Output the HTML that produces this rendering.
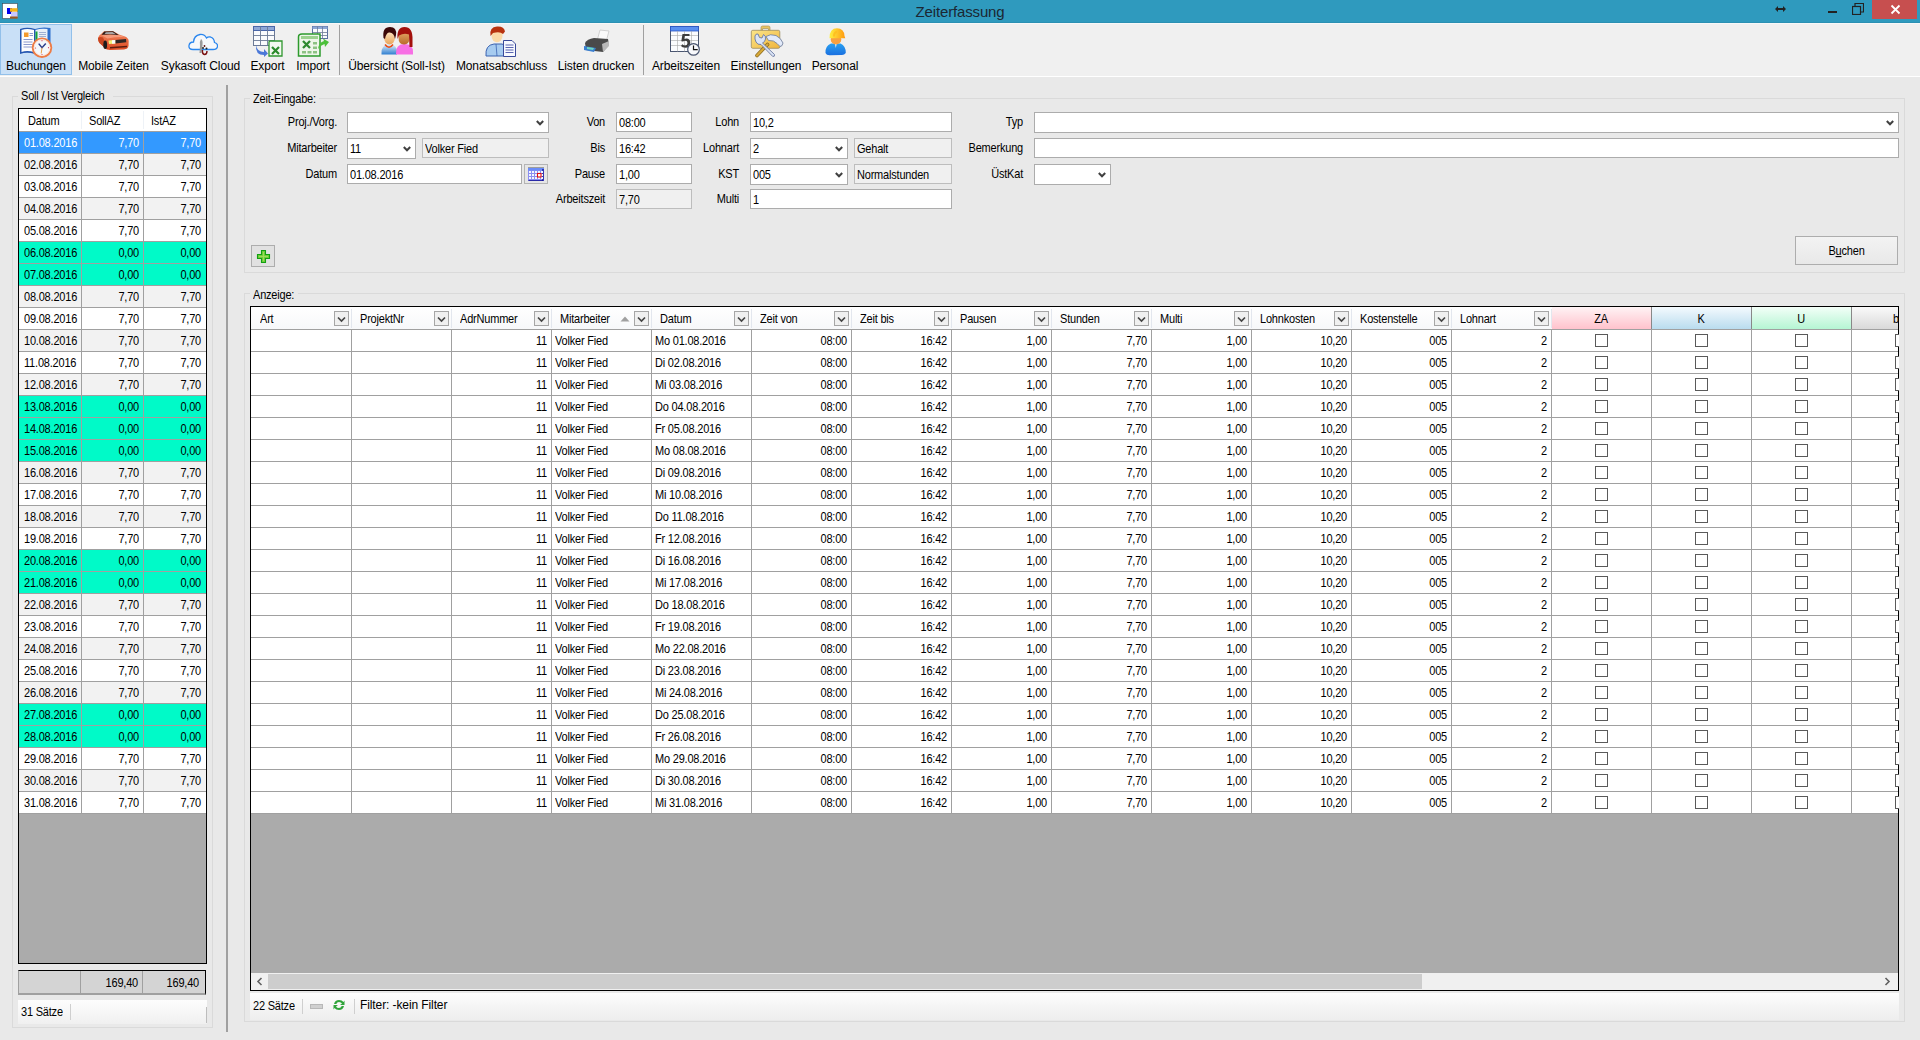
<!DOCTYPE html><html><head><meta charset="utf-8"><title>Zeiterfassung</title><style>
*{margin:0;padding:0;box-sizing:border-box}
html,body{width:1920px;height:1040px;overflow:hidden}
body{position:relative;background:#e9e9e9;font-family:"Liberation Sans",sans-serif;font-size:11px;color:#000}
.a{position:absolute}
.t{position:absolute;white-space:pre;line-height:13px;transform:scaleY(1.12);transform-origin:0 2.5px}
#title{left:0;top:0;width:1920px;height:22px;background:#2f9abe}
#title .bl{left:0;top:21px;width:1920px;height:1px;background:#2a8fb2}
#tb{left:0;top:22px;width:1920px;height:54px;background:#f0f0f0}
#tbline{left:0;top:76px;width:1920px;height:1px;background:#fff}
.tbt{position:absolute;top:58px;font-size:12px;line-height:15px;white-space:pre;color:#000;text-align:center}
.sep{position:absolute;top:25px;width:1px;height:50px;background:#a0a0a0}
.box{position:absolute;background:#fff;border:1px solid #ababab}
.ro{background:#f0f0f0;border-color:#bcbcbc}
.lbl{position:absolute;white-space:pre;text-align:right;line-height:13px}
.chev{position:absolute}
.gl{position:absolute;background:#a0a0a0}
</style></head><body>
<div class="a" style="left:0;top:0;width:1920px;height:23px;background:#2f9abe"></div><div class="a" style="left:0;top:22px;width:1920px;height:1px;background:#2b90b3"></div><svg class="a" style="left:2px;top:3px" width="16" height="16" viewBox="0 0 16 16"><rect x="0.5" y="0.5" width="15" height="15" fill="#fff" stroke="#3a4650" stroke-width="0.6"/><rect x="5" y="5" width="5" height="6" fill="#0000f0"/><rect x="8" y="5.2" width="7.5" height="3.5" fill="#f6b418"/><rect x="9" y="9" width="6.5" height="5" fill="#c8c8ff"/><rect x="8" y="13.5" width="7.5" height="2" fill="#9a5a20"/></svg><div class="t" style="left:860px;width:200px;text-align:center;top:3px;font-size:15px;line-height:17px;letter-spacing:-0.15px;transform:none;color:#1b2733">Zeiterfassung</div><svg class="a" style="left:1774px;top:4px" width="13" height="10" viewBox="0 0 13 10"><path d="M1 5 L4 2 L4 4 L9 4 L9 2 L12 5 L9 8 L9 6 L4 6 L4 8 Z" fill="#222"/></svg><div class="a" style="left:1828px;top:11px;width:9px;height:2px;background:#222"></div><svg class="a" style="left:1852px;top:3px" width="12" height="12" viewBox="0 0 12 12"><rect x="0.5" y="3.5" width="8" height="8" fill="none" stroke="#222" stroke-width="1.2"/><path d="M3 3.5 V0.5 H11.5 V9 H8.5" fill="none" stroke="#222" stroke-width="1.2"/></svg><div class="a" style="left:1872px;top:0;width:45px;height:19px;background:#c74f4f"></div><svg class="a" style="left:1890px;top:4px" width="11" height="11" viewBox="0 0 11 11"><path d="M1.5 1.5 L9.5 9.5 M9.5 1.5 L1.5 9.5" stroke="#fff" stroke-width="1.8"/></svg>
<div class="a" style="left:0px;top:23px;width:1920px;height:53px;background:#f0f0f0"></div>
<div class="a" style="left:0px;top:76px;width:1920px;height:1px;background:#fff"></div>
<div class="a" style="left:0px;top:23px;width:1920px;height:1px;background:#f8f8f8"></div>
<div class="a" style="left:0px;top:24px;width:72px;height:51px;background:#c9e0f7;border:1px solid #92c0ea"></div>
<svg class="a" style="left:18px;top:26px" width="36" height="34" viewBox="0 0 36 34"><path d="M2 3 Q9 0.5 17 3 L17 28 Q9 25.5 2 28 Z" fill="#2556b0"/><path d="M3.5 4 Q9 2 16 4 L16 26 Q9 24 3.5 26 Z" fill="#fdfdfd"/><rect x="6" y="6.5" width="4.5" height="4.5" fill="#f39a2c"/><path d="M11.5 7.5h3.5M11.5 9.5h3.5M5.5 13.5h9M5.5 16h9M5.5 18.5h9M5.5 21h9" stroke="#6f80c0" stroke-width="0.8"/><path d="M17 3 Q24 0.5 32.5 2 L32.5 26 L17 28 Z" fill="#2f6fcc"/><path d="M17.5 4 Q23 2 29.5 3 L29.5 23 L17.5 25 Z" fill="#e9f0f8"/><rect x="17.5" y="5.5" width="2" height="10" fill="#17a33a"/><path d="M21 6.5h7M21 8.5h7M21 10.5h7" stroke="#7f93c3" stroke-width="0.7"/><circle cx="24" cy="21.7" r="9.3" fill="#f4f8fc" stroke="#ed7c46" stroke-width="1.9"/><circle cx="24" cy="21.7" r="7.8" fill="none" stroke="#fde3d2" stroke-width="0.8"/><path d="M20.7 17.6 L24 21.7 L27.8 17.4" stroke="#2b3d8a" stroke-width="1.5" fill="none"/><path d="M24 21.7 L23.2 27.5" stroke="#e49a3a" stroke-width="0.9"/><circle cx="24" cy="14.7" r="0.6" fill="#d04060"/><circle cx="30.5" cy="21.7" r="0.6" fill="#d04060"/><circle cx="24" cy="28.5" r="0.6" fill="#d04060"/><circle cx="17.5" cy="22" r="0.6" fill="#d04060"/></svg><svg class="a" style="left:96px;top:28px" width="34" height="26" viewBox="0 0 34 26"><defs><linearGradient id="cg" x1="0" y1="0" x2="0" y2="1"><stop offset="0" stop-color="#f48a62"/><stop offset="1" stop-color="#dc4a22"/></linearGradient></defs><path d="M2 10 Q3 7 5 6 L8 3.2 L17 3 L23 6.5 L29 8.5 Q32.5 10 32.7 13 L32.5 18 Q32 21 28 21.5 L14 22 Q10.5 22 9 20 L3.5 15 Q2 13 2 10 Z" fill="url(#cg)"/><path d="M5.5 6.8 L8.3 3.4 L17 3.2 L22.8 6.9 Q14 6.2 5.5 6.8 Z" fill="#2b1d1a"/><path d="M8.6 6.1 L9.8 4.3 L16.5 4.1 L20 6.3 Q14 5.7 8.6 6.1 Z" fill="#aaa6a6"/><path d="M5.5 7.2 Q15 6.5 23 7.2 L29.5 9.2 Q20 8.8 11.5 10.5 Z" fill="#f59a7a"/><path d="M2 10 Q4 8.5 7 9.5 L12 20.8 Q10 21.8 9 20 L3.5 15 Q2 13 2 10Z" fill="#c84520"/><ellipse cx="9.2" cy="16.8" rx="1.9" ry="4.3" fill="#1c1c1c"/><path d="M12.5 12.5 L19.5 12 L19.5 15.5 L13 16 Z" fill="#eef27a"/><path d="M16 12.3 L19.5 12 L19.5 15.5 L16 15.8 Z" fill="#fafafa"/><path d="M19.5 12 L30 11 L30.3 14.3 L19.5 15.5 Z" fill="#2e2624"/><path d="M14 19 L31 17.8 L31 19.2 L14 20.4 Z" fill="#5a1c10"/></svg><svg class="a" style="left:186px;top:30px" width="32" height="30" viewBox="0 0 32 30"><path d="M7 19.5 Q2.5 19.5 3 15.5 Q3.5 12 7.5 12 Q8 5.5 14 4.5 Q18.5 4 20.5 8 Q22 6.5 24.5 7 Q28 8 28.5 12.5 Q32 13.5 31.5 16.5 Q31 19.5 27 19.5 Z" fill="#f6f8fb" stroke="#2a86ee" stroke-width="1.3"/><path d="M15 9 Q17 10 16.5 15 L15.5 23 L13.5 23 L14 16 Q13 12 15 9Z" fill="#9a9a9a"/><circle cx="18.5" cy="16" r="0.9" fill="#5a1010"/><circle cx="17" cy="18" r="1" fill="#222"/><circle cx="20.5" cy="18.5" r="1" fill="#222"/><path d="M16.5 20 Q16 24 18.5 24.5 Q21 24.5 21 21" fill="none" stroke="#7a1010" stroke-width="1.4"/></svg><svg class="a" style="left:252px;top:25px" width="32" height="33" viewBox="0 0 32 33"><rect x="1.5" y="1.5" width="21" height="19" fill="#fafbfd" stroke="#6c7a96" stroke-width="1"/><rect x="1.5" y="1.5" width="21" height="4" fill="#8ea7d6" stroke="#4a66a8" stroke-width="1"/><path d="M8.5 1.5V20.5M15.5 1.5V20.5M1.5 10.5H22.5M1.5 15.5H22.5" stroke="#6c7a96" stroke-width="0.9"/><path d="M17 17 Q17 16 18 16 L30 16 L30 31 L17 31 Z" fill="#f3f8f0" stroke="#2f962f" stroke-width="1.3"/><path d="M20 22 L27 29 M27 22 L20 29" stroke="#2b8a2b" stroke-width="2.2"/><path d="M4 20 Q5 27 12 27 L12 24 L16 28.5 L12 32 L12 30 Q3 30 4 20 Z" fill="#4b78d8"/></svg><svg class="a" style="left:296px;top:25px" width="34" height="33" viewBox="0 0 34 33"><rect x="16.5" y="1.5" width="15" height="12" fill="#fafbfd" stroke="#5a6fa0" stroke-width="1"/><rect x="16.5" y="1.5" width="15" height="2.5" fill="#8ea7d6"/><path d="M21.5 1.5V13.5M26.5 1.5V13.5M16.5 7.5H31.5M16.5 10.5H31.5" stroke="#6c7a96" stroke-width="0.8"/><path d="M2.5 12 Q2.5 9 6 9 L24 9 L24 31 L2.5 31 Z" fill="#eef6ea" stroke="#2d9a2d" stroke-width="1.5"/><rect x="5" y="11" width="17" height="3" fill="#9bd28e"/><path d="M7 16 L14 23 M14 16 L7 23" stroke="#2f8a2f" stroke-width="2.3"/><rect x="6" y="26" width="4" height="2.5" fill="#8dc283"/><rect x="11.5" y="26" width="4" height="2.5" fill="#8dc283"/><rect x="17" y="26" width="4" height="2.5" fill="#8dc283"/><rect x="17" y="17" width="4" height="2.5" fill="#8dc283"/><rect x="17" y="21.5" width="4" height="2.5" fill="#8dc283"/><path d="M22 24 Q23 17 28 16 L27 13.5 L33 17 L29 22 L28.5 19 Q25 20 22 24 Z" fill="#4cc03a"/></svg><svg class="a" style="left:380px;top:26px" width="34" height="30" viewBox="0 0 34 30"><defs><linearGradient id="pb" x1="0" y1="0" x2="0" y2="1"><stop offset="0" stop-color="#e8f2fb"/><stop offset="1" stop-color="#2f7fd0"/></linearGradient><linearGradient id="pf" x1="0" y1="0" x2="0" y2="1"><stop offset="0" stop-color="#ffe8c8"/><stop offset="1" stop-color="#e9a55a"/></linearGradient><linearGradient id="pw" x1="0" y1="0" x2="0" y2="1"><stop offset="0" stop-color="#e7a868"/><stop offset="1" stop-color="#b86a2a"/></linearGradient></defs><path d="M1.5 27.5 Q1 19 9 18 Q17 18.5 17 26 L17 28.5 L1.5 28.5 Z" fill="url(#pb)"/><path d="M5 18.5 Q9 24 13 18.5" fill="none" stroke="#ee4a10" stroke-width="1.5"/><path d="M16 27.5 Q15.5 18 24.5 18 Q33 18 33 26 L33 28.5 L16 28.5 Z" fill="#f76fe4"/><ellipse cx="9.5" cy="11.5" rx="5.5" ry="7" fill="url(#pf)"/><path d="M3.5 12 Q2 1 10 1 Q17 1 16 9 L15 13 Q14 6 9 6.5 Q6 7 5 13 Z" fill="#3c0808"/><path d="M18.5 11.5 Q18.5 18.5 24 18.5 Q29.5 18.5 29.5 11.5 Q29.5 5 24 5 Q18.5 5 18.5 11.5 Z" fill="url(#pw)"/><path d="M17.5 13 Q16.5 1 24.5 1 Q33 1 32.5 14 L32.5 21 L29.5 21 L29 8.5 Q24 6.5 19 9.5 Z" fill="#a3100c"/></svg><svg class="a" style="left:484px;top:25px" width="34" height="33" viewBox="0 0 34 33"><path d="M2 31 Q1 20 10 19 L18 19 Q24 20 24 31 Z" fill="#a6cbf0" stroke="#3a62b0" stroke-width="1"/><path d="M12 19 L13 31" stroke="#3a62b0" stroke-width="0.8"/><ellipse cx="13" cy="11" rx="5.5" ry="6.2" fill="#fbd9a6"/><path d="M6.5 11 Q5 2 13 1.5 Q20 1 21 6.5 L19 9 Q16 6 9 8 Z" fill="#b8320e"/><path d="M19.5 15.5 L28 15.5 L31.5 19 L31.5 31.5 L19.5 31.5 Z" fill="#f7f9ff" stroke="#3a4a9a" stroke-width="1"/><path d="M21.5 20h8M21.5 22.5h8M21.5 25h8M21.5 27.5h8" stroke="#4a55a8" stroke-width="0.9"/></svg><svg class="a" style="left:582px;top:29px" width="32" height="26" viewBox="0 0 32 26"><path d="M18 1 L27 2 L24 13 L15 12 Z" fill="#fafafa" stroke="#c8c8c8" stroke-width="0.8"/><path d="M3 14 Q5 10 12 9 L26 10 L27 16 L21 23 L4 21 Z" fill="#4a4a4a"/><path d="M20 15 L27 12 L27 17 L21 23 Z" fill="#b8b8b8"/><path d="M2 17 L14 19 L12 23 L2 21 Z" fill="#3a7fd0"/><path d="M5 18 L12 19 L11 21 L5 20 Z" fill="#6fd6c0"/></svg><svg class="a" style="left:669px;top:25px" width="32" height="34" viewBox="0 0 32 34"><rect x="1.5" y="1.5" width="28" height="25" fill="#fbfcfe" stroke="#4a5670" stroke-width="1"/><rect x="1.5" y="1.5" width="28" height="4.5" fill="#5b8ff0" stroke="#2a55c8" stroke-width="0.8"/><path d="M8.5 6V26.5M15.5 6V26.5M22.5 6V26.5M2 10.5H29M2 15.5H29M2 20.5H29" stroke="#a8a8a8" stroke-width="0.6"/><path d="M13.5 9 H20.5 V11 H15.8 L15.3 14 Q16.5 13.3 18 13.5 Q21.5 14 21.3 18 Q21 22.5 16.5 22.8 Q13 22.8 12 21 L13.3 19.3 Q14.5 20.5 16.3 20.5 Q18.5 20.3 18.5 18 Q18.5 15.7 16.3 15.7 Q14.8 15.7 14 16.6 L12.3 16.2 Z" fill="#3d3d3d"/><circle cx="24.5" cy="24.4" r="5.8" fill="#f8f9fc" stroke="#4a5670" stroke-width="1.2"/><path d="M24.5 20.5 V24.6 H28.7" stroke="#111" stroke-width="1.2" fill="none"/></svg><svg class="a" style="left:750px;top:25px" width="34" height="34" viewBox="0 0 34 34"><defs><linearGradient id="tbg" x1="0" y1="0" x2="1" y2="1"><stop offset="0" stop-color="#fbe68a"/><stop offset="1" stop-color="#f0b43c"/></linearGradient></defs><path d="M11 7 L11 2.5 Q11 1 12.5 1 L18.5 1 Q20 1 20 2.5 L20 7 L18.5 7 L18.5 4 Q18.5 3.5 18 3.5 L13 3.5 Q12.5 3.5 12.5 4 L12.5 7 Z" fill="#e8c460" stroke="#a08850" stroke-width="0.6"/><rect x="1.3" y="5.3" width="28.5" height="18" rx="1.5" fill="url(#tbg)" stroke="#9a8a60" stroke-width="0.8"/><path d="M17.5 19.5 L7 30.5" stroke="#8a6a20" stroke-width="3.6" stroke-linecap="round"/><path d="M17.5 19.5 L7 30.5" stroke="#d6a838" stroke-width="2.2" stroke-linecap="round"/><path d="M16 11.5 Q20 8.5 26 10.5 Q31 13 33 18 Q32.5 21.5 30 21.5 L27 18.5 Q24 15 18.5 15.5 Z" fill="#e2eafa" stroke="#76839e" stroke-width="0.9"/><path d="M5 11 Q5.5 8.5 8 9 L9.5 12.5 L12 13 L13.5 9.5 Q16 10.5 15.5 14 Q15 17 12.5 18 L24.5 29.5 Q25 31.8 22.8 31.5 L11 19.5 Q7.5 20 6 17 Q4.5 14 5 11 Z" fill="#dae4f6" stroke="#6a78a0" stroke-width="0.9"/></svg><svg class="a" style="left:822px;top:26px" width="28" height="32" viewBox="0 0 28 32"><defs><linearGradient id="wb" x1="0" y1="0" x2="0" y2="1"><stop offset="0" stop-color="#2aa0f0"/><stop offset="1" stop-color="#1a6fe0"/></linearGradient><linearGradient id="wh" x1="0" y1="0" x2="1" y2="0"><stop offset="0" stop-color="#fff040"/><stop offset="1" stop-color="#ff9810"/></linearGradient></defs><path d="M3.5 27 Q3 20 9 17.5 L18.5 17.5 Q24 20 23.8 27 Q22 29.5 19 29 L8 29.3 Q4.5 29.5 3.5 27 Z" fill="url(#wb)"/><path d="M12.8 17.5 L13.8 22 L14.8 17.5 Z" fill="#e8f0f8"/><ellipse cx="14" cy="13.5" rx="5.3" ry="5" fill="#f8a040"/><path d="M7.5 12 Q7.5 2.3 15 2.3 Q22 2.3 22.5 10 L23.3 12.3 L7.5 12.3 Z" fill="url(#wh)"/><path d="M11 10.5 Q11 5 15 5 L15 7 Q13 7 13 10.5 Z" fill="#ffc020"/></svg>
<div class="t" style="left:-114px;width:300px;text-align:center;top:59px;font-size:12px;line-height:15px;letter-spacing:-0.1px;transform:none">Buchungen</div>
<div class="t" style="left:-36.5px;width:300px;text-align:center;top:59px;font-size:12px;line-height:15px;letter-spacing:-0.1px;transform:none">Mobile Zeiten</div>
<div class="t" style="left:50.5px;width:300px;text-align:center;top:59px;font-size:12px;line-height:15px;letter-spacing:-0.1px;transform:none">Sykasoft Cloud</div>
<div class="t" style="left:117.5px;width:300px;text-align:center;top:59px;font-size:12px;line-height:15px;letter-spacing:-0.1px;transform:none">Export</div>
<div class="t" style="left:163px;width:300px;text-align:center;top:59px;font-size:12px;line-height:15px;letter-spacing:-0.1px;transform:none">Import</div>
<div class="t" style="left:246.5px;width:300px;text-align:center;top:59px;font-size:12px;line-height:15px;letter-spacing:-0.1px;transform:none">Übersicht (Soll-Ist)</div>
<div class="t" style="left:351.5px;width:300px;text-align:center;top:59px;font-size:12px;line-height:15px;letter-spacing:-0.1px;transform:none">Monatsabschluss</div>
<div class="t" style="left:446px;width:300px;text-align:center;top:59px;font-size:12px;line-height:15px;letter-spacing:-0.1px;transform:none">Listen drucken</div>
<div class="t" style="left:536px;width:300px;text-align:center;top:59px;font-size:12px;line-height:15px;letter-spacing:-0.1px;transform:none">Arbeitszeiten</div>
<div class="t" style="left:616px;width:300px;text-align:center;top:59px;font-size:12px;line-height:15px;letter-spacing:-0.1px;transform:none">Einstellungen</div>
<div class="t" style="left:685px;width:300px;text-align:center;top:59px;font-size:12px;line-height:15px;letter-spacing:-0.1px;transform:none">Personal</div>
<div class="a" style="left:339px;top:25px;width:1px;height:50px;background:#a0a0a0"></div>
<div class="a" style="left:643px;top:25px;width:1px;height:50px;background:#a0a0a0"></div>
<div class="a" style="left:12px;top:96px;width:201px;height:932px;border:1px solid #dadada"></div>
<div class="a" style="left:18px;top:92px;width:95px;height:10px;background:#e9e9e9"></div>
<div class="t" style="left:21px;top:89px;letter-spacing:-0.2px">Soll / Ist Vergleich</div>
<div class="a" style="left:18px;top:108px;width:189px;height:856px;background:#ababab;border:1px solid #000"></div>
<div class="a" style="left:19px;top:109px;width:187px;height:22px;background:#fff"></div>
<div class="t" style="left:28px;top:114px;letter-spacing:-0.2px">Datum</div>
<div class="t" style="left:89px;top:114px;letter-spacing:-0.2px">SollAZ</div>
<div class="t" style="left:151px;top:114px;letter-spacing:-0.2px">IstAZ</div>
<div class="a" style="left:81px;top:111px;width:1px;height:18px;background:#eef2f7"></div>
<div class="a" style="left:143px;top:111px;width:1px;height:18px;background:#eef2f7"></div>
<div class="a" style="left:19px;top:131px;width:187px;height:1px;background:#a0a0a0"></div>
<div class="a" style="left:19px;top:132px;width:187px;height:21px;background:#3399ff"></div>
<div class="a" style="left:19px;top:153px;width:187px;height:1px;background:#a0a0a0"></div>
<div class="t" style="left:24px;top:136px;color:#fff;letter-spacing:-0.2px">01.08.2016</div>
<div class="t" style="right:1781px;top:136px;text-align:right;color:#fff;letter-spacing:-0.2px">7,70</div>
<div class="t" style="right:1719px;top:136px;text-align:right;color:#fff;letter-spacing:-0.2px">7,70</div>
<div class="a" style="left:19px;top:154px;width:187px;height:21px;background:#f2f2f2"></div>
<div class="a" style="left:19px;top:175px;width:187px;height:1px;background:#a0a0a0"></div>
<div class="t" style="left:24px;top:158px;color:#000;letter-spacing:-0.2px">02.08.2016</div>
<div class="t" style="right:1781px;top:158px;text-align:right;color:#000;letter-spacing:-0.2px">7,70</div>
<div class="t" style="right:1719px;top:158px;text-align:right;color:#000;letter-spacing:-0.2px">7,70</div>
<div class="a" style="left:19px;top:176px;width:187px;height:21px;background:#fff"></div>
<div class="a" style="left:19px;top:197px;width:187px;height:1px;background:#a0a0a0"></div>
<div class="t" style="left:24px;top:180px;color:#000;letter-spacing:-0.2px">03.08.2016</div>
<div class="t" style="right:1781px;top:180px;text-align:right;color:#000;letter-spacing:-0.2px">7,70</div>
<div class="t" style="right:1719px;top:180px;text-align:right;color:#000;letter-spacing:-0.2px">7,70</div>
<div class="a" style="left:19px;top:198px;width:187px;height:21px;background:#f2f2f2"></div>
<div class="a" style="left:19px;top:219px;width:187px;height:1px;background:#a0a0a0"></div>
<div class="t" style="left:24px;top:202px;color:#000;letter-spacing:-0.2px">04.08.2016</div>
<div class="t" style="right:1781px;top:202px;text-align:right;color:#000;letter-spacing:-0.2px">7,70</div>
<div class="t" style="right:1719px;top:202px;text-align:right;color:#000;letter-spacing:-0.2px">7,70</div>
<div class="a" style="left:19px;top:220px;width:187px;height:21px;background:#fff"></div>
<div class="a" style="left:19px;top:241px;width:187px;height:1px;background:#a0a0a0"></div>
<div class="t" style="left:24px;top:224px;color:#000;letter-spacing:-0.2px">05.08.2016</div>
<div class="t" style="right:1781px;top:224px;text-align:right;color:#000;letter-spacing:-0.2px">7,70</div>
<div class="t" style="right:1719px;top:224px;text-align:right;color:#000;letter-spacing:-0.2px">7,70</div>
<div class="a" style="left:19px;top:242px;width:187px;height:21px;background:#00fac8"></div>
<div class="a" style="left:19px;top:263px;width:187px;height:1px;background:#a0a0a0"></div>
<div class="t" style="left:24px;top:246px;color:#000;letter-spacing:-0.2px">06.08.2016</div>
<div class="t" style="right:1781px;top:246px;text-align:right;color:#000;letter-spacing:-0.2px">0,00</div>
<div class="t" style="right:1719px;top:246px;text-align:right;color:#000;letter-spacing:-0.2px">0,00</div>
<div class="a" style="left:19px;top:264px;width:187px;height:21px;background:#00fac8"></div>
<div class="a" style="left:19px;top:285px;width:187px;height:1px;background:#a0a0a0"></div>
<div class="t" style="left:24px;top:268px;color:#000;letter-spacing:-0.2px">07.08.2016</div>
<div class="t" style="right:1781px;top:268px;text-align:right;color:#000;letter-spacing:-0.2px">0,00</div>
<div class="t" style="right:1719px;top:268px;text-align:right;color:#000;letter-spacing:-0.2px">0,00</div>
<div class="a" style="left:19px;top:286px;width:187px;height:21px;background:#f2f2f2"></div>
<div class="a" style="left:19px;top:307px;width:187px;height:1px;background:#a0a0a0"></div>
<div class="t" style="left:24px;top:290px;color:#000;letter-spacing:-0.2px">08.08.2016</div>
<div class="t" style="right:1781px;top:290px;text-align:right;color:#000;letter-spacing:-0.2px">7,70</div>
<div class="t" style="right:1719px;top:290px;text-align:right;color:#000;letter-spacing:-0.2px">7,70</div>
<div class="a" style="left:19px;top:308px;width:187px;height:21px;background:#fff"></div>
<div class="a" style="left:19px;top:329px;width:187px;height:1px;background:#a0a0a0"></div>
<div class="t" style="left:24px;top:312px;color:#000;letter-spacing:-0.2px">09.08.2016</div>
<div class="t" style="right:1781px;top:312px;text-align:right;color:#000;letter-spacing:-0.2px">7,70</div>
<div class="t" style="right:1719px;top:312px;text-align:right;color:#000;letter-spacing:-0.2px">7,70</div>
<div class="a" style="left:19px;top:330px;width:187px;height:21px;background:#f2f2f2"></div>
<div class="a" style="left:19px;top:351px;width:187px;height:1px;background:#a0a0a0"></div>
<div class="t" style="left:24px;top:334px;color:#000;letter-spacing:-0.2px">10.08.2016</div>
<div class="t" style="right:1781px;top:334px;text-align:right;color:#000;letter-spacing:-0.2px">7,70</div>
<div class="t" style="right:1719px;top:334px;text-align:right;color:#000;letter-spacing:-0.2px">7,70</div>
<div class="a" style="left:19px;top:352px;width:187px;height:21px;background:#fff"></div>
<div class="a" style="left:19px;top:373px;width:187px;height:1px;background:#a0a0a0"></div>
<div class="t" style="left:24px;top:356px;color:#000;letter-spacing:-0.2px">11.08.2016</div>
<div class="t" style="right:1781px;top:356px;text-align:right;color:#000;letter-spacing:-0.2px">7,70</div>
<div class="t" style="right:1719px;top:356px;text-align:right;color:#000;letter-spacing:-0.2px">7,70</div>
<div class="a" style="left:19px;top:374px;width:187px;height:21px;background:#f2f2f2"></div>
<div class="a" style="left:19px;top:395px;width:187px;height:1px;background:#a0a0a0"></div>
<div class="t" style="left:24px;top:378px;color:#000;letter-spacing:-0.2px">12.08.2016</div>
<div class="t" style="right:1781px;top:378px;text-align:right;color:#000;letter-spacing:-0.2px">7,70</div>
<div class="t" style="right:1719px;top:378px;text-align:right;color:#000;letter-spacing:-0.2px">7,70</div>
<div class="a" style="left:19px;top:396px;width:187px;height:21px;background:#00fac8"></div>
<div class="a" style="left:19px;top:417px;width:187px;height:1px;background:#a0a0a0"></div>
<div class="t" style="left:24px;top:400px;color:#000;letter-spacing:-0.2px">13.08.2016</div>
<div class="t" style="right:1781px;top:400px;text-align:right;color:#000;letter-spacing:-0.2px">0,00</div>
<div class="t" style="right:1719px;top:400px;text-align:right;color:#000;letter-spacing:-0.2px">0,00</div>
<div class="a" style="left:19px;top:418px;width:187px;height:21px;background:#00fac8"></div>
<div class="a" style="left:19px;top:439px;width:187px;height:1px;background:#a0a0a0"></div>
<div class="t" style="left:24px;top:422px;color:#000;letter-spacing:-0.2px">14.08.2016</div>
<div class="t" style="right:1781px;top:422px;text-align:right;color:#000;letter-spacing:-0.2px">0,00</div>
<div class="t" style="right:1719px;top:422px;text-align:right;color:#000;letter-spacing:-0.2px">0,00</div>
<div class="a" style="left:19px;top:440px;width:187px;height:21px;background:#00fac8"></div>
<div class="a" style="left:19px;top:461px;width:187px;height:1px;background:#a0a0a0"></div>
<div class="t" style="left:24px;top:444px;color:#000;letter-spacing:-0.2px">15.08.2016</div>
<div class="t" style="right:1781px;top:444px;text-align:right;color:#000;letter-spacing:-0.2px">0,00</div>
<div class="t" style="right:1719px;top:444px;text-align:right;color:#000;letter-spacing:-0.2px">0,00</div>
<div class="a" style="left:19px;top:462px;width:187px;height:21px;background:#f2f2f2"></div>
<div class="a" style="left:19px;top:483px;width:187px;height:1px;background:#a0a0a0"></div>
<div class="t" style="left:24px;top:466px;color:#000;letter-spacing:-0.2px">16.08.2016</div>
<div class="t" style="right:1781px;top:466px;text-align:right;color:#000;letter-spacing:-0.2px">7,70</div>
<div class="t" style="right:1719px;top:466px;text-align:right;color:#000;letter-spacing:-0.2px">7,70</div>
<div class="a" style="left:19px;top:484px;width:187px;height:21px;background:#fff"></div>
<div class="a" style="left:19px;top:505px;width:187px;height:1px;background:#a0a0a0"></div>
<div class="t" style="left:24px;top:488px;color:#000;letter-spacing:-0.2px">17.08.2016</div>
<div class="t" style="right:1781px;top:488px;text-align:right;color:#000;letter-spacing:-0.2px">7,70</div>
<div class="t" style="right:1719px;top:488px;text-align:right;color:#000;letter-spacing:-0.2px">7,70</div>
<div class="a" style="left:19px;top:506px;width:187px;height:21px;background:#f2f2f2"></div>
<div class="a" style="left:19px;top:527px;width:187px;height:1px;background:#a0a0a0"></div>
<div class="t" style="left:24px;top:510px;color:#000;letter-spacing:-0.2px">18.08.2016</div>
<div class="t" style="right:1781px;top:510px;text-align:right;color:#000;letter-spacing:-0.2px">7,70</div>
<div class="t" style="right:1719px;top:510px;text-align:right;color:#000;letter-spacing:-0.2px">7,70</div>
<div class="a" style="left:19px;top:528px;width:187px;height:21px;background:#fff"></div>
<div class="a" style="left:19px;top:549px;width:187px;height:1px;background:#a0a0a0"></div>
<div class="t" style="left:24px;top:532px;color:#000;letter-spacing:-0.2px">19.08.2016</div>
<div class="t" style="right:1781px;top:532px;text-align:right;color:#000;letter-spacing:-0.2px">7,70</div>
<div class="t" style="right:1719px;top:532px;text-align:right;color:#000;letter-spacing:-0.2px">7,70</div>
<div class="a" style="left:19px;top:550px;width:187px;height:21px;background:#00fac8"></div>
<div class="a" style="left:19px;top:571px;width:187px;height:1px;background:#a0a0a0"></div>
<div class="t" style="left:24px;top:554px;color:#000;letter-spacing:-0.2px">20.08.2016</div>
<div class="t" style="right:1781px;top:554px;text-align:right;color:#000;letter-spacing:-0.2px">0,00</div>
<div class="t" style="right:1719px;top:554px;text-align:right;color:#000;letter-spacing:-0.2px">0,00</div>
<div class="a" style="left:19px;top:572px;width:187px;height:21px;background:#00fac8"></div>
<div class="a" style="left:19px;top:593px;width:187px;height:1px;background:#a0a0a0"></div>
<div class="t" style="left:24px;top:576px;color:#000;letter-spacing:-0.2px">21.08.2016</div>
<div class="t" style="right:1781px;top:576px;text-align:right;color:#000;letter-spacing:-0.2px">0,00</div>
<div class="t" style="right:1719px;top:576px;text-align:right;color:#000;letter-spacing:-0.2px">0,00</div>
<div class="a" style="left:19px;top:594px;width:187px;height:21px;background:#f2f2f2"></div>
<div class="a" style="left:19px;top:615px;width:187px;height:1px;background:#a0a0a0"></div>
<div class="t" style="left:24px;top:598px;color:#000;letter-spacing:-0.2px">22.08.2016</div>
<div class="t" style="right:1781px;top:598px;text-align:right;color:#000;letter-spacing:-0.2px">7,70</div>
<div class="t" style="right:1719px;top:598px;text-align:right;color:#000;letter-spacing:-0.2px">7,70</div>
<div class="a" style="left:19px;top:616px;width:187px;height:21px;background:#fff"></div>
<div class="a" style="left:19px;top:637px;width:187px;height:1px;background:#a0a0a0"></div>
<div class="t" style="left:24px;top:620px;color:#000;letter-spacing:-0.2px">23.08.2016</div>
<div class="t" style="right:1781px;top:620px;text-align:right;color:#000;letter-spacing:-0.2px">7,70</div>
<div class="t" style="right:1719px;top:620px;text-align:right;color:#000;letter-spacing:-0.2px">7,70</div>
<div class="a" style="left:19px;top:638px;width:187px;height:21px;background:#f2f2f2"></div>
<div class="a" style="left:19px;top:659px;width:187px;height:1px;background:#a0a0a0"></div>
<div class="t" style="left:24px;top:642px;color:#000;letter-spacing:-0.2px">24.08.2016</div>
<div class="t" style="right:1781px;top:642px;text-align:right;color:#000;letter-spacing:-0.2px">7,70</div>
<div class="t" style="right:1719px;top:642px;text-align:right;color:#000;letter-spacing:-0.2px">7,70</div>
<div class="a" style="left:19px;top:660px;width:187px;height:21px;background:#fff"></div>
<div class="a" style="left:19px;top:681px;width:187px;height:1px;background:#a0a0a0"></div>
<div class="t" style="left:24px;top:664px;color:#000;letter-spacing:-0.2px">25.08.2016</div>
<div class="t" style="right:1781px;top:664px;text-align:right;color:#000;letter-spacing:-0.2px">7,70</div>
<div class="t" style="right:1719px;top:664px;text-align:right;color:#000;letter-spacing:-0.2px">7,70</div>
<div class="a" style="left:19px;top:682px;width:187px;height:21px;background:#f2f2f2"></div>
<div class="a" style="left:19px;top:703px;width:187px;height:1px;background:#a0a0a0"></div>
<div class="t" style="left:24px;top:686px;color:#000;letter-spacing:-0.2px">26.08.2016</div>
<div class="t" style="right:1781px;top:686px;text-align:right;color:#000;letter-spacing:-0.2px">7,70</div>
<div class="t" style="right:1719px;top:686px;text-align:right;color:#000;letter-spacing:-0.2px">7,70</div>
<div class="a" style="left:19px;top:704px;width:187px;height:21px;background:#00fac8"></div>
<div class="a" style="left:19px;top:725px;width:187px;height:1px;background:#a0a0a0"></div>
<div class="t" style="left:24px;top:708px;color:#000;letter-spacing:-0.2px">27.08.2016</div>
<div class="t" style="right:1781px;top:708px;text-align:right;color:#000;letter-spacing:-0.2px">0,00</div>
<div class="t" style="right:1719px;top:708px;text-align:right;color:#000;letter-spacing:-0.2px">0,00</div>
<div class="a" style="left:19px;top:726px;width:187px;height:21px;background:#00fac8"></div>
<div class="a" style="left:19px;top:747px;width:187px;height:1px;background:#a0a0a0"></div>
<div class="t" style="left:24px;top:730px;color:#000;letter-spacing:-0.2px">28.08.2016</div>
<div class="t" style="right:1781px;top:730px;text-align:right;color:#000;letter-spacing:-0.2px">0,00</div>
<div class="t" style="right:1719px;top:730px;text-align:right;color:#000;letter-spacing:-0.2px">0,00</div>
<div class="a" style="left:19px;top:748px;width:187px;height:21px;background:#fff"></div>
<div class="a" style="left:19px;top:769px;width:187px;height:1px;background:#a0a0a0"></div>
<div class="t" style="left:24px;top:752px;color:#000;letter-spacing:-0.2px">29.08.2016</div>
<div class="t" style="right:1781px;top:752px;text-align:right;color:#000;letter-spacing:-0.2px">7,70</div>
<div class="t" style="right:1719px;top:752px;text-align:right;color:#000;letter-spacing:-0.2px">7,70</div>
<div class="a" style="left:19px;top:770px;width:187px;height:21px;background:#f2f2f2"></div>
<div class="a" style="left:19px;top:791px;width:187px;height:1px;background:#a0a0a0"></div>
<div class="t" style="left:24px;top:774px;color:#000;letter-spacing:-0.2px">30.08.2016</div>
<div class="t" style="right:1781px;top:774px;text-align:right;color:#000;letter-spacing:-0.2px">7,70</div>
<div class="t" style="right:1719px;top:774px;text-align:right;color:#000;letter-spacing:-0.2px">7,70</div>
<div class="a" style="left:19px;top:792px;width:187px;height:21px;background:#fff"></div>
<div class="a" style="left:19px;top:813px;width:187px;height:1px;background:#a0a0a0"></div>
<div class="t" style="left:24px;top:796px;color:#000;letter-spacing:-0.2px">31.08.2016</div>
<div class="t" style="right:1781px;top:796px;text-align:right;color:#000;letter-spacing:-0.2px">7,70</div>
<div class="t" style="right:1719px;top:796px;text-align:right;color:#000;letter-spacing:-0.2px">7,70</div>
<div class="a" style="left:81px;top:132px;width:1px;height:682px;background:#a0a0a0"></div>
<div class="a" style="left:143px;top:132px;width:1px;height:682px;background:#a0a0a0"></div>
<div class="a" style="left:18px;top:970px;width:188px;height:25px;background:#d4d4d4;border-top:1px solid #000;border-right:1px solid #000;border-left:1px solid #a0a0a0;border-bottom:2px solid #a0a0a0"></div>
<div class="a" style="left:80px;top:971px;width:1px;height:23px;background:#a0a0a0"></div>
<div class="a" style="left:142px;top:971px;width:1px;height:23px;background:#a0a0a0"></div>
<div class="t" style="right:1782px;top:976px;text-align:right;letter-spacing:-0.2px">169,40</div>
<div class="t" style="right:1721px;top:976px;text-align:right;letter-spacing:-0.2px">169,40</div>
<div class="a" style="left:18px;top:1000px;width:189px;height:24px;background:linear-gradient(#fdfdfd,#f0f0f0)"></div>
<div class="t" style="left:21px;top:1005px;letter-spacing:-0.2px">31 Sätze</div>
<div class="a" style="left:70px;top:1004px;width:1px;height:16px;background:#cfcfcf"></div>
<div class="a" style="left:206px;top:1007px;width:1px;height:16px;background:#bdbdbd"></div>
<div class="a" style="left:226px;top:85px;width:2px;height:947px;background:#a0a0a0"></div>
<div class="a" style="left:244px;top:98px;width:1661px;height:175px;border:1px solid #dadada"></div>
<div class="a" style="left:250px;top:92px;width:69px;height:12px;background:#e9e9e9"></div>
<div class="t" style="left:253px;top:92px;letter-spacing:-0.2px">Zeit-Eingabe:</div>
<div class="t" style="right:1583px;top:115px;text-align:right;letter-spacing:-0.2px">Proj./Vorg.</div>
<div class="a" style="left:347px;top:112px;width:202px;height:21px;background:#fff;border:1px solid #acacac"></div>
<svg class="a" style="left:536px;top:120px" width="8" height="6" viewBox="0 0 8 6"><path d="M0.8 1 L4 4.3 L7.2 1" stroke="#404040" stroke-width="2" fill="none"/></svg>
<div class="t" style="right:1583px;top:141px;text-align:right;letter-spacing:-0.2px">Mitarbeiter</div>
<div class="a" style="left:347px;top:138px;width:69px;height:21px;background:#fff;border:1px solid #acacac"></div>
<div class="t" style="left:350px;top:142px;letter-spacing:-0.2px">11</div>
<svg class="a" style="left:403px;top:146px" width="8" height="6" viewBox="0 0 8 6"><path d="M0.8 1 L4 4.3 L7.2 1" stroke="#404040" stroke-width="2" fill="none"/></svg>
<div class="a" style="left:422px;top:138px;width:127px;height:20px;background:#f0f0f0;border:1px solid #bdbdbd"></div>
<div class="t" style="left:425px;top:142px;letter-spacing:-0.2px">Volker Fied</div>
<div class="t" style="right:1583px;top:167px;text-align:right;letter-spacing:-0.2px">Datum</div>
<div class="a" style="left:347px;top:164px;width:175px;height:20px;background:#fff;border:1px solid #acacac"></div>
<div class="t" style="left:350px;top:168px;letter-spacing:-0.2px">01.08.2016</div>
<div class="a" style="left:524px;top:164px;width:24px;height:20px;background:#e6e6e6;border:1px solid #b4b4b4"></div>
<svg class="a" style="left:528px;top:167px" width="16" height="14" viewBox="0 0 16 14"><rect x="0" y="1" width="16" height="13" fill="#8c8ef0"/><rect x="0" y="1" width="16" height="2.5" fill="#6a8cf8"/><path d="M15 2V14H0.5" stroke="#0a0a90" stroke-width="1.3" fill="none"/><path d="M0.5 0.5h1M2.5 0.5h1M4.5 0.5h1M6.5 0.5h1M8.5 0.5h1M10.5 0.5h1M12.5 0.5h1M14.5 0.5h1" stroke="#555" stroke-width="1"/><rect x="1" y="4" width="2" height="2" fill="#f4f8ff"/><rect x="1" y="7" width="2" height="2" fill="#f4f8ff"/><rect x="1" y="10" width="2" height="2" fill="#f4f8ff"/><rect x="4" y="4" width="2" height="2" fill="#f4f8ff"/><rect x="4" y="7" width="2" height="2" fill="#f4f8ff"/><rect x="4" y="10" width="2" height="2" fill="#f4f8ff"/><rect x="7" y="4" width="2" height="2" fill="#f4f8ff"/><rect x="7" y="7" width="2" height="2" fill="#f4f8ff"/><rect x="7" y="10" width="2" height="2" fill="#f4f8ff"/><rect x="10" y="4" width="2" height="2" fill="#f4f8ff"/><rect x="10" y="7" width="2" height="2" fill="#f4f8ff"/><rect x="10" y="10" width="2" height="2" fill="#f4f8ff"/><rect x="13" y="4" width="2" height="2" fill="#f4f8ff"/><rect x="13" y="7" width="2" height="2" fill="#f4f8ff"/><rect x="13" y="10" width="2" height="2" fill="#f4f8ff"/><rect x="9.5" y="6.5" width="3.5" height="3.5" fill="#fff" stroke="#e01010" stroke-width="1.1"/></svg>
<div class="t" style="right:1315px;top:115px;text-align:right;letter-spacing:-0.2px">Von</div>
<div class="a" style="left:616px;top:112px;width:76px;height:20px;background:#fff;border:1px solid #acacac"></div>
<div class="t" style="left:619px;top:116px;letter-spacing:-0.2px">08:00</div>
<div class="t" style="right:1315px;top:141px;text-align:right;letter-spacing:-0.2px">Bis</div>
<div class="a" style="left:616px;top:138px;width:76px;height:20px;background:#fff;border:1px solid #acacac"></div>
<div class="t" style="left:619px;top:142px;letter-spacing:-0.2px">16:42</div>
<div class="t" style="right:1315px;top:167px;text-align:right;letter-spacing:-0.2px">Pause</div>
<div class="a" style="left:616px;top:164px;width:76px;height:20px;background:#fff;border:1px solid #acacac"></div>
<div class="t" style="left:619px;top:168px;letter-spacing:-0.2px">1,00</div>
<div class="t" style="right:1315px;top:192px;text-align:right;letter-spacing:-0.2px">Arbeitszeit</div>
<div class="a" style="left:616px;top:189px;width:76px;height:20px;background:#f0f0f0;border:1px solid #bdbdbd"></div>
<div class="t" style="left:619px;top:193px;letter-spacing:-0.2px">7,70</div>
<div class="t" style="right:1181px;top:115px;text-align:right;letter-spacing:-0.2px">Lohn</div>
<div class="a" style="left:750px;top:112px;width:202px;height:20px;background:#fff;border:1px solid #acacac"></div>
<div class="t" style="left:753px;top:116px;letter-spacing:-0.2px">10,2</div>
<div class="t" style="right:1181px;top:141px;text-align:right;letter-spacing:-0.2px">Lohnart</div>
<div class="a" style="left:750px;top:138px;width:98px;height:21px;background:#fff;border:1px solid #acacac"></div>
<div class="t" style="left:753px;top:142px;letter-spacing:-0.2px">2</div>
<svg class="a" style="left:835px;top:146px" width="8" height="6" viewBox="0 0 8 6"><path d="M0.8 1 L4 4.3 L7.2 1" stroke="#404040" stroke-width="2" fill="none"/></svg>
<div class="a" style="left:854px;top:138px;width:98px;height:20px;background:#f0f0f0;border:1px solid #bdbdbd"></div>
<div class="t" style="left:857px;top:142px;letter-spacing:-0.2px">Gehalt</div>
<div class="t" style="right:1181px;top:167px;text-align:right;letter-spacing:-0.2px">KST</div>
<div class="a" style="left:750px;top:164px;width:98px;height:21px;background:#fff;border:1px solid #acacac"></div>
<div class="t" style="left:753px;top:168px;letter-spacing:-0.2px">005</div>
<svg class="a" style="left:835px;top:172px" width="8" height="6" viewBox="0 0 8 6"><path d="M0.8 1 L4 4.3 L7.2 1" stroke="#404040" stroke-width="2" fill="none"/></svg>
<div class="a" style="left:854px;top:164px;width:98px;height:20px;background:#f0f0f0;border:1px solid #bdbdbd"></div>
<div class="t" style="left:857px;top:168px;letter-spacing:-0.2px">Normalstunden</div>
<div class="t" style="right:1181px;top:192px;text-align:right;letter-spacing:-0.2px">Multi</div>
<div class="a" style="left:750px;top:189px;width:202px;height:20px;background:#fff;border:1px solid #acacac"></div>
<div class="t" style="left:753px;top:193px;letter-spacing:-0.2px">1</div>
<div class="t" style="right:897px;top:115px;text-align:right;letter-spacing:-0.2px">Typ</div>
<div class="a" style="left:1034px;top:112px;width:865px;height:21px;background:#fff;border:1px solid #acacac"></div>
<svg class="a" style="left:1886px;top:120px" width="8" height="6" viewBox="0 0 8 6"><path d="M0.8 1 L4 4.3 L7.2 1" stroke="#404040" stroke-width="2" fill="none"/></svg>
<div class="t" style="right:897px;top:141px;text-align:right;letter-spacing:-0.2px">Bemerkung</div>
<div class="a" style="left:1034px;top:138px;width:865px;height:20px;background:#fff;border:1px solid #acacac"></div>
<div class="t" style="right:897px;top:167px;text-align:right;letter-spacing:-0.2px">ÜstKat</div>
<div class="a" style="left:1034px;top:164px;width:77px;height:21px;background:#fff;border:1px solid #acacac"></div>
<svg class="a" style="left:1098px;top:172px" width="8" height="6" viewBox="0 0 8 6"><path d="M0.8 1 L4 4.3 L7.2 1" stroke="#404040" stroke-width="2" fill="none"/></svg>
<div class="a" style="left:251px;top:245px;width:24px;height:22px;background:#e1e1e1;border:1px solid #adadad"></div>
<svg class="a" style="left:256px;top:249px" width="15" height="15" viewBox="0 0 15 15"><path d="M5.5 1.5H9.5V5.5H13.5V9.5H9.5V13.5H5.5V9.5H1.5V5.5H5.5Z" fill="#6fcf3a" stroke="#12a012" stroke-width="1.1"/><path d="M7.5 3V12M3 7.5H12" stroke="#a8e060" stroke-width="0.8"/></svg>
<div class="a" style="left:1795px;top:236px;width:103px;height:29px;background:linear-gradient(#f3f3f3,#e8e8e8);border:1px solid #adadad"></div>
<div class="t" style="left:1696.5px;width:300px;text-align:center;top:244px;letter-spacing:-0.2px">B<span style="text-decoration:underline">u</span>chen</div>
<div class="a" style="left:244px;top:293px;width:1661px;height:729px;border:1px solid #dadada"></div>
<div class="a" style="left:250px;top:287px;width:48px;height:12px;background:#e9e9e9"></div>
<div class="t" style="left:253px;top:288px;letter-spacing:-0.2px">Anzeige:</div>
<div class="a" style="left:250px;top:306px;width:1649px;height:685px;background:#ababab;border:1px solid #000"></div>
<div class="a" style="left:251px;top:307px;width:1647px;height:22px;background:linear-gradient(#ffffff,#f7f8fa)"></div>
<div class="t" style="left:260px;top:312px;letter-spacing:-0.2px">Art</div>
<svg class="a" style="left:334px;top:311px" width="15" height="15" viewBox="0 0 15 15"><rect x="0.5" y="0.5" width="14" height="14" fill="#f0f0f0" stroke="#a6a6a6"/><path d="M4 6.5 L7.5 10 L11 6.5" stroke="#444" stroke-width="1.7" fill="none"/></svg>
<div class="a" style="left:351px;top:309px;width:1px;height:19px;background:#e3e7ee"></div>
<div class="t" style="left:360px;top:312px;letter-spacing:-0.2px">ProjektNr</div>
<svg class="a" style="left:434px;top:311px" width="15" height="15" viewBox="0 0 15 15"><rect x="0.5" y="0.5" width="14" height="14" fill="#f0f0f0" stroke="#a6a6a6"/><path d="M4 6.5 L7.5 10 L11 6.5" stroke="#444" stroke-width="1.7" fill="none"/></svg>
<div class="a" style="left:451px;top:309px;width:1px;height:19px;background:#e3e7ee"></div>
<div class="t" style="left:460px;top:312px;letter-spacing:-0.2px">AdrNummer</div>
<svg class="a" style="left:534px;top:311px" width="15" height="15" viewBox="0 0 15 15"><rect x="0.5" y="0.5" width="14" height="14" fill="#f0f0f0" stroke="#a6a6a6"/><path d="M4 6.5 L7.5 10 L11 6.5" stroke="#444" stroke-width="1.7" fill="none"/></svg>
<div class="a" style="left:551px;top:309px;width:1px;height:19px;background:#e3e7ee"></div>
<div class="t" style="left:560px;top:312px;letter-spacing:-0.2px">Mitarbeiter</div>
<svg class="a" style="left:634px;top:311px" width="15" height="15" viewBox="0 0 15 15"><rect x="0.5" y="0.5" width="14" height="14" fill="#f0f0f0" stroke="#a6a6a6"/><path d="M4 6.5 L7.5 10 L11 6.5" stroke="#444" stroke-width="1.7" fill="none"/></svg>
<div class="a" style="left:651px;top:309px;width:1px;height:19px;background:#e3e7ee"></div>
<div class="t" style="left:660px;top:312px;letter-spacing:-0.2px">Datum</div>
<svg class="a" style="left:734px;top:311px" width="15" height="15" viewBox="0 0 15 15"><rect x="0.5" y="0.5" width="14" height="14" fill="#f0f0f0" stroke="#a6a6a6"/><path d="M4 6.5 L7.5 10 L11 6.5" stroke="#444" stroke-width="1.7" fill="none"/></svg>
<div class="a" style="left:751px;top:309px;width:1px;height:19px;background:#e3e7ee"></div>
<div class="t" style="left:760px;top:312px;letter-spacing:-0.2px">Zeit von</div>
<svg class="a" style="left:834px;top:311px" width="15" height="15" viewBox="0 0 15 15"><rect x="0.5" y="0.5" width="14" height="14" fill="#f0f0f0" stroke="#a6a6a6"/><path d="M4 6.5 L7.5 10 L11 6.5" stroke="#444" stroke-width="1.7" fill="none"/></svg>
<div class="a" style="left:851px;top:309px;width:1px;height:19px;background:#e3e7ee"></div>
<div class="t" style="left:860px;top:312px;letter-spacing:-0.2px">Zeit bis</div>
<svg class="a" style="left:934px;top:311px" width="15" height="15" viewBox="0 0 15 15"><rect x="0.5" y="0.5" width="14" height="14" fill="#f0f0f0" stroke="#a6a6a6"/><path d="M4 6.5 L7.5 10 L11 6.5" stroke="#444" stroke-width="1.7" fill="none"/></svg>
<div class="a" style="left:951px;top:309px;width:1px;height:19px;background:#e3e7ee"></div>
<div class="t" style="left:960px;top:312px;letter-spacing:-0.2px">Pausen</div>
<svg class="a" style="left:1034px;top:311px" width="15" height="15" viewBox="0 0 15 15"><rect x="0.5" y="0.5" width="14" height="14" fill="#f0f0f0" stroke="#a6a6a6"/><path d="M4 6.5 L7.5 10 L11 6.5" stroke="#444" stroke-width="1.7" fill="none"/></svg>
<div class="a" style="left:1051px;top:309px;width:1px;height:19px;background:#e3e7ee"></div>
<div class="t" style="left:1060px;top:312px;letter-spacing:-0.2px">Stunden</div>
<svg class="a" style="left:1134px;top:311px" width="15" height="15" viewBox="0 0 15 15"><rect x="0.5" y="0.5" width="14" height="14" fill="#f0f0f0" stroke="#a6a6a6"/><path d="M4 6.5 L7.5 10 L11 6.5" stroke="#444" stroke-width="1.7" fill="none"/></svg>
<div class="a" style="left:1151px;top:309px;width:1px;height:19px;background:#e3e7ee"></div>
<div class="t" style="left:1160px;top:312px;letter-spacing:-0.2px">Multi</div>
<svg class="a" style="left:1234px;top:311px" width="15" height="15" viewBox="0 0 15 15"><rect x="0.5" y="0.5" width="14" height="14" fill="#f0f0f0" stroke="#a6a6a6"/><path d="M4 6.5 L7.5 10 L11 6.5" stroke="#444" stroke-width="1.7" fill="none"/></svg>
<div class="a" style="left:1251px;top:309px;width:1px;height:19px;background:#e3e7ee"></div>
<div class="t" style="left:1260px;top:312px;letter-spacing:-0.2px">Lohnkosten</div>
<svg class="a" style="left:1334px;top:311px" width="15" height="15" viewBox="0 0 15 15"><rect x="0.5" y="0.5" width="14" height="14" fill="#f0f0f0" stroke="#a6a6a6"/><path d="M4 6.5 L7.5 10 L11 6.5" stroke="#444" stroke-width="1.7" fill="none"/></svg>
<div class="a" style="left:1351px;top:309px;width:1px;height:19px;background:#e3e7ee"></div>
<div class="t" style="left:1360px;top:312px;letter-spacing:-0.2px">Kostenstelle</div>
<svg class="a" style="left:1434px;top:311px" width="15" height="15" viewBox="0 0 15 15"><rect x="0.5" y="0.5" width="14" height="14" fill="#f0f0f0" stroke="#a6a6a6"/><path d="M4 6.5 L7.5 10 L11 6.5" stroke="#444" stroke-width="1.7" fill="none"/></svg>
<div class="a" style="left:1451px;top:309px;width:1px;height:19px;background:#e3e7ee"></div>
<div class="t" style="left:1460px;top:312px;letter-spacing:-0.2px">Lohnart</div>
<svg class="a" style="left:1534px;top:311px" width="15" height="15" viewBox="0 0 15 15"><rect x="0.5" y="0.5" width="14" height="14" fill="#f0f0f0" stroke="#a6a6a6"/><path d="M4 6.5 L7.5 10 L11 6.5" stroke="#444" stroke-width="1.7" fill="none"/></svg>
<div class="a" style="left:1551px;top:309px;width:1px;height:19px;background:#e3e7ee"></div>
<svg class="a" style="left:620px;top:316px" width="10" height="6" viewBox="0 0 10 6"><path d="M0.5 5.5 L5 0.5 L9.5 5.5 Z" fill="#a0a0a0"/></svg>
<div class="a" style="left:1552px;top:307px;width:99px;height:22px;background:linear-gradient(#fff3f5,#ffc2cc)"></div>
<div class="t" style="left:1451px;width:300px;text-align:center;top:312px;letter-spacing:-0.2px">ZA</div>
<div class="a" style="left:1652px;top:307px;width:99px;height:22px;background:linear-gradient(#f4fafe,#b9dcee)"></div>
<div class="t" style="left:1551px;width:300px;text-align:center;top:312px;letter-spacing:-0.2px">K</div>
<div class="a" style="left:1752px;top:307px;width:99px;height:22px;background:linear-gradient(#f3fff8,#b5f5d3)"></div>
<div class="t" style="left:1651px;width:300px;text-align:center;top:312px;letter-spacing:-0.2px">U</div>
<div class="a" style="left:1852px;top:307px;width:46px;height:22px;background:linear-gradient(#fafafa,#d9d9d9)"></div>
<div class="t" style="left:1893px;top:312px;letter-spacing:-0.2px">b</div>
<div class="a" style="left:1651px;top:307px;width:1px;height:22px;background:#888"></div>
<div class="a" style="left:1751px;top:307px;width:1px;height:22px;background:#888"></div>
<div class="a" style="left:1851px;top:307px;width:1px;height:22px;background:#888"></div>
<div class="a" style="left:251px;top:329px;width:1647px;height:1px;background:#a0a0a0"></div>
<div class="a" style="left:251px;top:330px;width:1647px;height:483px;background:#fff"></div>
<div class="a" style="left:251px;top:351px;width:1647px;height:1px;background:#a0a0a0"></div>
<div class="t" style="right:1373px;top:334px;text-align:right;letter-spacing:-0.2px">11</div>
<div class="t" style="left:555px;top:334px;letter-spacing:-0.2px">Volker Fied</div>
<div class="t" style="left:655px;top:334px;letter-spacing:-0.2px">Mo 01.08.2016</div>
<div class="t" style="right:1073px;top:334px;text-align:right;letter-spacing:-0.2px">08:00</div>
<div class="t" style="right:973px;top:334px;text-align:right;letter-spacing:-0.2px">16:42</div>
<div class="t" style="right:873px;top:334px;text-align:right;letter-spacing:-0.2px">1,00</div>
<div class="t" style="right:773px;top:334px;text-align:right;letter-spacing:-0.2px">7,70</div>
<div class="t" style="right:673px;top:334px;text-align:right;letter-spacing:-0.2px">1,00</div>
<div class="t" style="right:573px;top:334px;text-align:right;letter-spacing:-0.2px">10,20</div>
<div class="t" style="right:473px;top:334px;text-align:right;letter-spacing:-0.2px">005</div>
<div class="t" style="right:373px;top:334px;text-align:right;letter-spacing:-0.2px">2</div>
<svg class="a" style="left:1595px;top:334px" width="13" height="13" viewBox="0 0 13 13"><rect x="0.5" y="0.5" width="12" height="12" fill="#fff" stroke="#5a5a5a"/></svg>
<svg class="a" style="left:1695px;top:334px" width="13" height="13" viewBox="0 0 13 13"><rect x="0.5" y="0.5" width="12" height="12" fill="#fff" stroke="#5a5a5a"/></svg>
<svg class="a" style="left:1795px;top:334px" width="13" height="13" viewBox="0 0 13 13"><rect x="0.5" y="0.5" width="12" height="12" fill="#fff" stroke="#5a5a5a"/></svg>
<svg class="a" style="left:1895px;top:334px" width="4" height="13" viewBox="0 0 4 13"><rect x="0.5" y="0.5" width="12" height="12" fill="#fff" stroke="#5a5a5a"/></svg>
<div class="a" style="left:251px;top:373px;width:1647px;height:1px;background:#a0a0a0"></div>
<div class="t" style="right:1373px;top:356px;text-align:right;letter-spacing:-0.2px">11</div>
<div class="t" style="left:555px;top:356px;letter-spacing:-0.2px">Volker Fied</div>
<div class="t" style="left:655px;top:356px;letter-spacing:-0.2px">Di 02.08.2016</div>
<div class="t" style="right:1073px;top:356px;text-align:right;letter-spacing:-0.2px">08:00</div>
<div class="t" style="right:973px;top:356px;text-align:right;letter-spacing:-0.2px">16:42</div>
<div class="t" style="right:873px;top:356px;text-align:right;letter-spacing:-0.2px">1,00</div>
<div class="t" style="right:773px;top:356px;text-align:right;letter-spacing:-0.2px">7,70</div>
<div class="t" style="right:673px;top:356px;text-align:right;letter-spacing:-0.2px">1,00</div>
<div class="t" style="right:573px;top:356px;text-align:right;letter-spacing:-0.2px">10,20</div>
<div class="t" style="right:473px;top:356px;text-align:right;letter-spacing:-0.2px">005</div>
<div class="t" style="right:373px;top:356px;text-align:right;letter-spacing:-0.2px">2</div>
<svg class="a" style="left:1595px;top:356px" width="13" height="13" viewBox="0 0 13 13"><rect x="0.5" y="0.5" width="12" height="12" fill="#fff" stroke="#5a5a5a"/></svg>
<svg class="a" style="left:1695px;top:356px" width="13" height="13" viewBox="0 0 13 13"><rect x="0.5" y="0.5" width="12" height="12" fill="#fff" stroke="#5a5a5a"/></svg>
<svg class="a" style="left:1795px;top:356px" width="13" height="13" viewBox="0 0 13 13"><rect x="0.5" y="0.5" width="12" height="12" fill="#fff" stroke="#5a5a5a"/></svg>
<svg class="a" style="left:1895px;top:356px" width="4" height="13" viewBox="0 0 4 13"><rect x="0.5" y="0.5" width="12" height="12" fill="#fff" stroke="#5a5a5a"/></svg>
<div class="a" style="left:251px;top:395px;width:1647px;height:1px;background:#a0a0a0"></div>
<div class="t" style="right:1373px;top:378px;text-align:right;letter-spacing:-0.2px">11</div>
<div class="t" style="left:555px;top:378px;letter-spacing:-0.2px">Volker Fied</div>
<div class="t" style="left:655px;top:378px;letter-spacing:-0.2px">Mi 03.08.2016</div>
<div class="t" style="right:1073px;top:378px;text-align:right;letter-spacing:-0.2px">08:00</div>
<div class="t" style="right:973px;top:378px;text-align:right;letter-spacing:-0.2px">16:42</div>
<div class="t" style="right:873px;top:378px;text-align:right;letter-spacing:-0.2px">1,00</div>
<div class="t" style="right:773px;top:378px;text-align:right;letter-spacing:-0.2px">7,70</div>
<div class="t" style="right:673px;top:378px;text-align:right;letter-spacing:-0.2px">1,00</div>
<div class="t" style="right:573px;top:378px;text-align:right;letter-spacing:-0.2px">10,20</div>
<div class="t" style="right:473px;top:378px;text-align:right;letter-spacing:-0.2px">005</div>
<div class="t" style="right:373px;top:378px;text-align:right;letter-spacing:-0.2px">2</div>
<svg class="a" style="left:1595px;top:378px" width="13" height="13" viewBox="0 0 13 13"><rect x="0.5" y="0.5" width="12" height="12" fill="#fff" stroke="#5a5a5a"/></svg>
<svg class="a" style="left:1695px;top:378px" width="13" height="13" viewBox="0 0 13 13"><rect x="0.5" y="0.5" width="12" height="12" fill="#fff" stroke="#5a5a5a"/></svg>
<svg class="a" style="left:1795px;top:378px" width="13" height="13" viewBox="0 0 13 13"><rect x="0.5" y="0.5" width="12" height="12" fill="#fff" stroke="#5a5a5a"/></svg>
<svg class="a" style="left:1895px;top:378px" width="4" height="13" viewBox="0 0 4 13"><rect x="0.5" y="0.5" width="12" height="12" fill="#fff" stroke="#5a5a5a"/></svg>
<div class="a" style="left:251px;top:417px;width:1647px;height:1px;background:#a0a0a0"></div>
<div class="t" style="right:1373px;top:400px;text-align:right;letter-spacing:-0.2px">11</div>
<div class="t" style="left:555px;top:400px;letter-spacing:-0.2px">Volker Fied</div>
<div class="t" style="left:655px;top:400px;letter-spacing:-0.2px">Do 04.08.2016</div>
<div class="t" style="right:1073px;top:400px;text-align:right;letter-spacing:-0.2px">08:00</div>
<div class="t" style="right:973px;top:400px;text-align:right;letter-spacing:-0.2px">16:42</div>
<div class="t" style="right:873px;top:400px;text-align:right;letter-spacing:-0.2px">1,00</div>
<div class="t" style="right:773px;top:400px;text-align:right;letter-spacing:-0.2px">7,70</div>
<div class="t" style="right:673px;top:400px;text-align:right;letter-spacing:-0.2px">1,00</div>
<div class="t" style="right:573px;top:400px;text-align:right;letter-spacing:-0.2px">10,20</div>
<div class="t" style="right:473px;top:400px;text-align:right;letter-spacing:-0.2px">005</div>
<div class="t" style="right:373px;top:400px;text-align:right;letter-spacing:-0.2px">2</div>
<svg class="a" style="left:1595px;top:400px" width="13" height="13" viewBox="0 0 13 13"><rect x="0.5" y="0.5" width="12" height="12" fill="#fff" stroke="#5a5a5a"/></svg>
<svg class="a" style="left:1695px;top:400px" width="13" height="13" viewBox="0 0 13 13"><rect x="0.5" y="0.5" width="12" height="12" fill="#fff" stroke="#5a5a5a"/></svg>
<svg class="a" style="left:1795px;top:400px" width="13" height="13" viewBox="0 0 13 13"><rect x="0.5" y="0.5" width="12" height="12" fill="#fff" stroke="#5a5a5a"/></svg>
<svg class="a" style="left:1895px;top:400px" width="4" height="13" viewBox="0 0 4 13"><rect x="0.5" y="0.5" width="12" height="12" fill="#fff" stroke="#5a5a5a"/></svg>
<div class="a" style="left:251px;top:439px;width:1647px;height:1px;background:#a0a0a0"></div>
<div class="t" style="right:1373px;top:422px;text-align:right;letter-spacing:-0.2px">11</div>
<div class="t" style="left:555px;top:422px;letter-spacing:-0.2px">Volker Fied</div>
<div class="t" style="left:655px;top:422px;letter-spacing:-0.2px">Fr 05.08.2016</div>
<div class="t" style="right:1073px;top:422px;text-align:right;letter-spacing:-0.2px">08:00</div>
<div class="t" style="right:973px;top:422px;text-align:right;letter-spacing:-0.2px">16:42</div>
<div class="t" style="right:873px;top:422px;text-align:right;letter-spacing:-0.2px">1,00</div>
<div class="t" style="right:773px;top:422px;text-align:right;letter-spacing:-0.2px">7,70</div>
<div class="t" style="right:673px;top:422px;text-align:right;letter-spacing:-0.2px">1,00</div>
<div class="t" style="right:573px;top:422px;text-align:right;letter-spacing:-0.2px">10,20</div>
<div class="t" style="right:473px;top:422px;text-align:right;letter-spacing:-0.2px">005</div>
<div class="t" style="right:373px;top:422px;text-align:right;letter-spacing:-0.2px">2</div>
<svg class="a" style="left:1595px;top:422px" width="13" height="13" viewBox="0 0 13 13"><rect x="0.5" y="0.5" width="12" height="12" fill="#fff" stroke="#5a5a5a"/></svg>
<svg class="a" style="left:1695px;top:422px" width="13" height="13" viewBox="0 0 13 13"><rect x="0.5" y="0.5" width="12" height="12" fill="#fff" stroke="#5a5a5a"/></svg>
<svg class="a" style="left:1795px;top:422px" width="13" height="13" viewBox="0 0 13 13"><rect x="0.5" y="0.5" width="12" height="12" fill="#fff" stroke="#5a5a5a"/></svg>
<svg class="a" style="left:1895px;top:422px" width="4" height="13" viewBox="0 0 4 13"><rect x="0.5" y="0.5" width="12" height="12" fill="#fff" stroke="#5a5a5a"/></svg>
<div class="a" style="left:251px;top:461px;width:1647px;height:1px;background:#a0a0a0"></div>
<div class="t" style="right:1373px;top:444px;text-align:right;letter-spacing:-0.2px">11</div>
<div class="t" style="left:555px;top:444px;letter-spacing:-0.2px">Volker Fied</div>
<div class="t" style="left:655px;top:444px;letter-spacing:-0.2px">Mo 08.08.2016</div>
<div class="t" style="right:1073px;top:444px;text-align:right;letter-spacing:-0.2px">08:00</div>
<div class="t" style="right:973px;top:444px;text-align:right;letter-spacing:-0.2px">16:42</div>
<div class="t" style="right:873px;top:444px;text-align:right;letter-spacing:-0.2px">1,00</div>
<div class="t" style="right:773px;top:444px;text-align:right;letter-spacing:-0.2px">7,70</div>
<div class="t" style="right:673px;top:444px;text-align:right;letter-spacing:-0.2px">1,00</div>
<div class="t" style="right:573px;top:444px;text-align:right;letter-spacing:-0.2px">10,20</div>
<div class="t" style="right:473px;top:444px;text-align:right;letter-spacing:-0.2px">005</div>
<div class="t" style="right:373px;top:444px;text-align:right;letter-spacing:-0.2px">2</div>
<svg class="a" style="left:1595px;top:444px" width="13" height="13" viewBox="0 0 13 13"><rect x="0.5" y="0.5" width="12" height="12" fill="#fff" stroke="#5a5a5a"/></svg>
<svg class="a" style="left:1695px;top:444px" width="13" height="13" viewBox="0 0 13 13"><rect x="0.5" y="0.5" width="12" height="12" fill="#fff" stroke="#5a5a5a"/></svg>
<svg class="a" style="left:1795px;top:444px" width="13" height="13" viewBox="0 0 13 13"><rect x="0.5" y="0.5" width="12" height="12" fill="#fff" stroke="#5a5a5a"/></svg>
<svg class="a" style="left:1895px;top:444px" width="4" height="13" viewBox="0 0 4 13"><rect x="0.5" y="0.5" width="12" height="12" fill="#fff" stroke="#5a5a5a"/></svg>
<div class="a" style="left:251px;top:483px;width:1647px;height:1px;background:#a0a0a0"></div>
<div class="t" style="right:1373px;top:466px;text-align:right;letter-spacing:-0.2px">11</div>
<div class="t" style="left:555px;top:466px;letter-spacing:-0.2px">Volker Fied</div>
<div class="t" style="left:655px;top:466px;letter-spacing:-0.2px">Di 09.08.2016</div>
<div class="t" style="right:1073px;top:466px;text-align:right;letter-spacing:-0.2px">08:00</div>
<div class="t" style="right:973px;top:466px;text-align:right;letter-spacing:-0.2px">16:42</div>
<div class="t" style="right:873px;top:466px;text-align:right;letter-spacing:-0.2px">1,00</div>
<div class="t" style="right:773px;top:466px;text-align:right;letter-spacing:-0.2px">7,70</div>
<div class="t" style="right:673px;top:466px;text-align:right;letter-spacing:-0.2px">1,00</div>
<div class="t" style="right:573px;top:466px;text-align:right;letter-spacing:-0.2px">10,20</div>
<div class="t" style="right:473px;top:466px;text-align:right;letter-spacing:-0.2px">005</div>
<div class="t" style="right:373px;top:466px;text-align:right;letter-spacing:-0.2px">2</div>
<svg class="a" style="left:1595px;top:466px" width="13" height="13" viewBox="0 0 13 13"><rect x="0.5" y="0.5" width="12" height="12" fill="#fff" stroke="#5a5a5a"/></svg>
<svg class="a" style="left:1695px;top:466px" width="13" height="13" viewBox="0 0 13 13"><rect x="0.5" y="0.5" width="12" height="12" fill="#fff" stroke="#5a5a5a"/></svg>
<svg class="a" style="left:1795px;top:466px" width="13" height="13" viewBox="0 0 13 13"><rect x="0.5" y="0.5" width="12" height="12" fill="#fff" stroke="#5a5a5a"/></svg>
<svg class="a" style="left:1895px;top:466px" width="4" height="13" viewBox="0 0 4 13"><rect x="0.5" y="0.5" width="12" height="12" fill="#fff" stroke="#5a5a5a"/></svg>
<div class="a" style="left:251px;top:505px;width:1647px;height:1px;background:#a0a0a0"></div>
<div class="t" style="right:1373px;top:488px;text-align:right;letter-spacing:-0.2px">11</div>
<div class="t" style="left:555px;top:488px;letter-spacing:-0.2px">Volker Fied</div>
<div class="t" style="left:655px;top:488px;letter-spacing:-0.2px">Mi 10.08.2016</div>
<div class="t" style="right:1073px;top:488px;text-align:right;letter-spacing:-0.2px">08:00</div>
<div class="t" style="right:973px;top:488px;text-align:right;letter-spacing:-0.2px">16:42</div>
<div class="t" style="right:873px;top:488px;text-align:right;letter-spacing:-0.2px">1,00</div>
<div class="t" style="right:773px;top:488px;text-align:right;letter-spacing:-0.2px">7,70</div>
<div class="t" style="right:673px;top:488px;text-align:right;letter-spacing:-0.2px">1,00</div>
<div class="t" style="right:573px;top:488px;text-align:right;letter-spacing:-0.2px">10,20</div>
<div class="t" style="right:473px;top:488px;text-align:right;letter-spacing:-0.2px">005</div>
<div class="t" style="right:373px;top:488px;text-align:right;letter-spacing:-0.2px">2</div>
<svg class="a" style="left:1595px;top:488px" width="13" height="13" viewBox="0 0 13 13"><rect x="0.5" y="0.5" width="12" height="12" fill="#fff" stroke="#5a5a5a"/></svg>
<svg class="a" style="left:1695px;top:488px" width="13" height="13" viewBox="0 0 13 13"><rect x="0.5" y="0.5" width="12" height="12" fill="#fff" stroke="#5a5a5a"/></svg>
<svg class="a" style="left:1795px;top:488px" width="13" height="13" viewBox="0 0 13 13"><rect x="0.5" y="0.5" width="12" height="12" fill="#fff" stroke="#5a5a5a"/></svg>
<svg class="a" style="left:1895px;top:488px" width="4" height="13" viewBox="0 0 4 13"><rect x="0.5" y="0.5" width="12" height="12" fill="#fff" stroke="#5a5a5a"/></svg>
<div class="a" style="left:251px;top:527px;width:1647px;height:1px;background:#a0a0a0"></div>
<div class="t" style="right:1373px;top:510px;text-align:right;letter-spacing:-0.2px">11</div>
<div class="t" style="left:555px;top:510px;letter-spacing:-0.2px">Volker Fied</div>
<div class="t" style="left:655px;top:510px;letter-spacing:-0.2px">Do 11.08.2016</div>
<div class="t" style="right:1073px;top:510px;text-align:right;letter-spacing:-0.2px">08:00</div>
<div class="t" style="right:973px;top:510px;text-align:right;letter-spacing:-0.2px">16:42</div>
<div class="t" style="right:873px;top:510px;text-align:right;letter-spacing:-0.2px">1,00</div>
<div class="t" style="right:773px;top:510px;text-align:right;letter-spacing:-0.2px">7,70</div>
<div class="t" style="right:673px;top:510px;text-align:right;letter-spacing:-0.2px">1,00</div>
<div class="t" style="right:573px;top:510px;text-align:right;letter-spacing:-0.2px">10,20</div>
<div class="t" style="right:473px;top:510px;text-align:right;letter-spacing:-0.2px">005</div>
<div class="t" style="right:373px;top:510px;text-align:right;letter-spacing:-0.2px">2</div>
<svg class="a" style="left:1595px;top:510px" width="13" height="13" viewBox="0 0 13 13"><rect x="0.5" y="0.5" width="12" height="12" fill="#fff" stroke="#5a5a5a"/></svg>
<svg class="a" style="left:1695px;top:510px" width="13" height="13" viewBox="0 0 13 13"><rect x="0.5" y="0.5" width="12" height="12" fill="#fff" stroke="#5a5a5a"/></svg>
<svg class="a" style="left:1795px;top:510px" width="13" height="13" viewBox="0 0 13 13"><rect x="0.5" y="0.5" width="12" height="12" fill="#fff" stroke="#5a5a5a"/></svg>
<svg class="a" style="left:1895px;top:510px" width="4" height="13" viewBox="0 0 4 13"><rect x="0.5" y="0.5" width="12" height="12" fill="#fff" stroke="#5a5a5a"/></svg>
<div class="a" style="left:251px;top:549px;width:1647px;height:1px;background:#a0a0a0"></div>
<div class="t" style="right:1373px;top:532px;text-align:right;letter-spacing:-0.2px">11</div>
<div class="t" style="left:555px;top:532px;letter-spacing:-0.2px">Volker Fied</div>
<div class="t" style="left:655px;top:532px;letter-spacing:-0.2px">Fr 12.08.2016</div>
<div class="t" style="right:1073px;top:532px;text-align:right;letter-spacing:-0.2px">08:00</div>
<div class="t" style="right:973px;top:532px;text-align:right;letter-spacing:-0.2px">16:42</div>
<div class="t" style="right:873px;top:532px;text-align:right;letter-spacing:-0.2px">1,00</div>
<div class="t" style="right:773px;top:532px;text-align:right;letter-spacing:-0.2px">7,70</div>
<div class="t" style="right:673px;top:532px;text-align:right;letter-spacing:-0.2px">1,00</div>
<div class="t" style="right:573px;top:532px;text-align:right;letter-spacing:-0.2px">10,20</div>
<div class="t" style="right:473px;top:532px;text-align:right;letter-spacing:-0.2px">005</div>
<div class="t" style="right:373px;top:532px;text-align:right;letter-spacing:-0.2px">2</div>
<svg class="a" style="left:1595px;top:532px" width="13" height="13" viewBox="0 0 13 13"><rect x="0.5" y="0.5" width="12" height="12" fill="#fff" stroke="#5a5a5a"/></svg>
<svg class="a" style="left:1695px;top:532px" width="13" height="13" viewBox="0 0 13 13"><rect x="0.5" y="0.5" width="12" height="12" fill="#fff" stroke="#5a5a5a"/></svg>
<svg class="a" style="left:1795px;top:532px" width="13" height="13" viewBox="0 0 13 13"><rect x="0.5" y="0.5" width="12" height="12" fill="#fff" stroke="#5a5a5a"/></svg>
<svg class="a" style="left:1895px;top:532px" width="4" height="13" viewBox="0 0 4 13"><rect x="0.5" y="0.5" width="12" height="12" fill="#fff" stroke="#5a5a5a"/></svg>
<div class="a" style="left:251px;top:571px;width:1647px;height:1px;background:#a0a0a0"></div>
<div class="t" style="right:1373px;top:554px;text-align:right;letter-spacing:-0.2px">11</div>
<div class="t" style="left:555px;top:554px;letter-spacing:-0.2px">Volker Fied</div>
<div class="t" style="left:655px;top:554px;letter-spacing:-0.2px">Di 16.08.2016</div>
<div class="t" style="right:1073px;top:554px;text-align:right;letter-spacing:-0.2px">08:00</div>
<div class="t" style="right:973px;top:554px;text-align:right;letter-spacing:-0.2px">16:42</div>
<div class="t" style="right:873px;top:554px;text-align:right;letter-spacing:-0.2px">1,00</div>
<div class="t" style="right:773px;top:554px;text-align:right;letter-spacing:-0.2px">7,70</div>
<div class="t" style="right:673px;top:554px;text-align:right;letter-spacing:-0.2px">1,00</div>
<div class="t" style="right:573px;top:554px;text-align:right;letter-spacing:-0.2px">10,20</div>
<div class="t" style="right:473px;top:554px;text-align:right;letter-spacing:-0.2px">005</div>
<div class="t" style="right:373px;top:554px;text-align:right;letter-spacing:-0.2px">2</div>
<svg class="a" style="left:1595px;top:554px" width="13" height="13" viewBox="0 0 13 13"><rect x="0.5" y="0.5" width="12" height="12" fill="#fff" stroke="#5a5a5a"/></svg>
<svg class="a" style="left:1695px;top:554px" width="13" height="13" viewBox="0 0 13 13"><rect x="0.5" y="0.5" width="12" height="12" fill="#fff" stroke="#5a5a5a"/></svg>
<svg class="a" style="left:1795px;top:554px" width="13" height="13" viewBox="0 0 13 13"><rect x="0.5" y="0.5" width="12" height="12" fill="#fff" stroke="#5a5a5a"/></svg>
<svg class="a" style="left:1895px;top:554px" width="4" height="13" viewBox="0 0 4 13"><rect x="0.5" y="0.5" width="12" height="12" fill="#fff" stroke="#5a5a5a"/></svg>
<div class="a" style="left:251px;top:593px;width:1647px;height:1px;background:#a0a0a0"></div>
<div class="t" style="right:1373px;top:576px;text-align:right;letter-spacing:-0.2px">11</div>
<div class="t" style="left:555px;top:576px;letter-spacing:-0.2px">Volker Fied</div>
<div class="t" style="left:655px;top:576px;letter-spacing:-0.2px">Mi 17.08.2016</div>
<div class="t" style="right:1073px;top:576px;text-align:right;letter-spacing:-0.2px">08:00</div>
<div class="t" style="right:973px;top:576px;text-align:right;letter-spacing:-0.2px">16:42</div>
<div class="t" style="right:873px;top:576px;text-align:right;letter-spacing:-0.2px">1,00</div>
<div class="t" style="right:773px;top:576px;text-align:right;letter-spacing:-0.2px">7,70</div>
<div class="t" style="right:673px;top:576px;text-align:right;letter-spacing:-0.2px">1,00</div>
<div class="t" style="right:573px;top:576px;text-align:right;letter-spacing:-0.2px">10,20</div>
<div class="t" style="right:473px;top:576px;text-align:right;letter-spacing:-0.2px">005</div>
<div class="t" style="right:373px;top:576px;text-align:right;letter-spacing:-0.2px">2</div>
<svg class="a" style="left:1595px;top:576px" width="13" height="13" viewBox="0 0 13 13"><rect x="0.5" y="0.5" width="12" height="12" fill="#fff" stroke="#5a5a5a"/></svg>
<svg class="a" style="left:1695px;top:576px" width="13" height="13" viewBox="0 0 13 13"><rect x="0.5" y="0.5" width="12" height="12" fill="#fff" stroke="#5a5a5a"/></svg>
<svg class="a" style="left:1795px;top:576px" width="13" height="13" viewBox="0 0 13 13"><rect x="0.5" y="0.5" width="12" height="12" fill="#fff" stroke="#5a5a5a"/></svg>
<svg class="a" style="left:1895px;top:576px" width="4" height="13" viewBox="0 0 4 13"><rect x="0.5" y="0.5" width="12" height="12" fill="#fff" stroke="#5a5a5a"/></svg>
<div class="a" style="left:251px;top:615px;width:1647px;height:1px;background:#a0a0a0"></div>
<div class="t" style="right:1373px;top:598px;text-align:right;letter-spacing:-0.2px">11</div>
<div class="t" style="left:555px;top:598px;letter-spacing:-0.2px">Volker Fied</div>
<div class="t" style="left:655px;top:598px;letter-spacing:-0.2px">Do 18.08.2016</div>
<div class="t" style="right:1073px;top:598px;text-align:right;letter-spacing:-0.2px">08:00</div>
<div class="t" style="right:973px;top:598px;text-align:right;letter-spacing:-0.2px">16:42</div>
<div class="t" style="right:873px;top:598px;text-align:right;letter-spacing:-0.2px">1,00</div>
<div class="t" style="right:773px;top:598px;text-align:right;letter-spacing:-0.2px">7,70</div>
<div class="t" style="right:673px;top:598px;text-align:right;letter-spacing:-0.2px">1,00</div>
<div class="t" style="right:573px;top:598px;text-align:right;letter-spacing:-0.2px">10,20</div>
<div class="t" style="right:473px;top:598px;text-align:right;letter-spacing:-0.2px">005</div>
<div class="t" style="right:373px;top:598px;text-align:right;letter-spacing:-0.2px">2</div>
<svg class="a" style="left:1595px;top:598px" width="13" height="13" viewBox="0 0 13 13"><rect x="0.5" y="0.5" width="12" height="12" fill="#fff" stroke="#5a5a5a"/></svg>
<svg class="a" style="left:1695px;top:598px" width="13" height="13" viewBox="0 0 13 13"><rect x="0.5" y="0.5" width="12" height="12" fill="#fff" stroke="#5a5a5a"/></svg>
<svg class="a" style="left:1795px;top:598px" width="13" height="13" viewBox="0 0 13 13"><rect x="0.5" y="0.5" width="12" height="12" fill="#fff" stroke="#5a5a5a"/></svg>
<svg class="a" style="left:1895px;top:598px" width="4" height="13" viewBox="0 0 4 13"><rect x="0.5" y="0.5" width="12" height="12" fill="#fff" stroke="#5a5a5a"/></svg>
<div class="a" style="left:251px;top:637px;width:1647px;height:1px;background:#a0a0a0"></div>
<div class="t" style="right:1373px;top:620px;text-align:right;letter-spacing:-0.2px">11</div>
<div class="t" style="left:555px;top:620px;letter-spacing:-0.2px">Volker Fied</div>
<div class="t" style="left:655px;top:620px;letter-spacing:-0.2px">Fr 19.08.2016</div>
<div class="t" style="right:1073px;top:620px;text-align:right;letter-spacing:-0.2px">08:00</div>
<div class="t" style="right:973px;top:620px;text-align:right;letter-spacing:-0.2px">16:42</div>
<div class="t" style="right:873px;top:620px;text-align:right;letter-spacing:-0.2px">1,00</div>
<div class="t" style="right:773px;top:620px;text-align:right;letter-spacing:-0.2px">7,70</div>
<div class="t" style="right:673px;top:620px;text-align:right;letter-spacing:-0.2px">1,00</div>
<div class="t" style="right:573px;top:620px;text-align:right;letter-spacing:-0.2px">10,20</div>
<div class="t" style="right:473px;top:620px;text-align:right;letter-spacing:-0.2px">005</div>
<div class="t" style="right:373px;top:620px;text-align:right;letter-spacing:-0.2px">2</div>
<svg class="a" style="left:1595px;top:620px" width="13" height="13" viewBox="0 0 13 13"><rect x="0.5" y="0.5" width="12" height="12" fill="#fff" stroke="#5a5a5a"/></svg>
<svg class="a" style="left:1695px;top:620px" width="13" height="13" viewBox="0 0 13 13"><rect x="0.5" y="0.5" width="12" height="12" fill="#fff" stroke="#5a5a5a"/></svg>
<svg class="a" style="left:1795px;top:620px" width="13" height="13" viewBox="0 0 13 13"><rect x="0.5" y="0.5" width="12" height="12" fill="#fff" stroke="#5a5a5a"/></svg>
<svg class="a" style="left:1895px;top:620px" width="4" height="13" viewBox="0 0 4 13"><rect x="0.5" y="0.5" width="12" height="12" fill="#fff" stroke="#5a5a5a"/></svg>
<div class="a" style="left:251px;top:659px;width:1647px;height:1px;background:#a0a0a0"></div>
<div class="t" style="right:1373px;top:642px;text-align:right;letter-spacing:-0.2px">11</div>
<div class="t" style="left:555px;top:642px;letter-spacing:-0.2px">Volker Fied</div>
<div class="t" style="left:655px;top:642px;letter-spacing:-0.2px">Mo 22.08.2016</div>
<div class="t" style="right:1073px;top:642px;text-align:right;letter-spacing:-0.2px">08:00</div>
<div class="t" style="right:973px;top:642px;text-align:right;letter-spacing:-0.2px">16:42</div>
<div class="t" style="right:873px;top:642px;text-align:right;letter-spacing:-0.2px">1,00</div>
<div class="t" style="right:773px;top:642px;text-align:right;letter-spacing:-0.2px">7,70</div>
<div class="t" style="right:673px;top:642px;text-align:right;letter-spacing:-0.2px">1,00</div>
<div class="t" style="right:573px;top:642px;text-align:right;letter-spacing:-0.2px">10,20</div>
<div class="t" style="right:473px;top:642px;text-align:right;letter-spacing:-0.2px">005</div>
<div class="t" style="right:373px;top:642px;text-align:right;letter-spacing:-0.2px">2</div>
<svg class="a" style="left:1595px;top:642px" width="13" height="13" viewBox="0 0 13 13"><rect x="0.5" y="0.5" width="12" height="12" fill="#fff" stroke="#5a5a5a"/></svg>
<svg class="a" style="left:1695px;top:642px" width="13" height="13" viewBox="0 0 13 13"><rect x="0.5" y="0.5" width="12" height="12" fill="#fff" stroke="#5a5a5a"/></svg>
<svg class="a" style="left:1795px;top:642px" width="13" height="13" viewBox="0 0 13 13"><rect x="0.5" y="0.5" width="12" height="12" fill="#fff" stroke="#5a5a5a"/></svg>
<svg class="a" style="left:1895px;top:642px" width="4" height="13" viewBox="0 0 4 13"><rect x="0.5" y="0.5" width="12" height="12" fill="#fff" stroke="#5a5a5a"/></svg>
<div class="a" style="left:251px;top:681px;width:1647px;height:1px;background:#a0a0a0"></div>
<div class="t" style="right:1373px;top:664px;text-align:right;letter-spacing:-0.2px">11</div>
<div class="t" style="left:555px;top:664px;letter-spacing:-0.2px">Volker Fied</div>
<div class="t" style="left:655px;top:664px;letter-spacing:-0.2px">Di 23.08.2016</div>
<div class="t" style="right:1073px;top:664px;text-align:right;letter-spacing:-0.2px">08:00</div>
<div class="t" style="right:973px;top:664px;text-align:right;letter-spacing:-0.2px">16:42</div>
<div class="t" style="right:873px;top:664px;text-align:right;letter-spacing:-0.2px">1,00</div>
<div class="t" style="right:773px;top:664px;text-align:right;letter-spacing:-0.2px">7,70</div>
<div class="t" style="right:673px;top:664px;text-align:right;letter-spacing:-0.2px">1,00</div>
<div class="t" style="right:573px;top:664px;text-align:right;letter-spacing:-0.2px">10,20</div>
<div class="t" style="right:473px;top:664px;text-align:right;letter-spacing:-0.2px">005</div>
<div class="t" style="right:373px;top:664px;text-align:right;letter-spacing:-0.2px">2</div>
<svg class="a" style="left:1595px;top:664px" width="13" height="13" viewBox="0 0 13 13"><rect x="0.5" y="0.5" width="12" height="12" fill="#fff" stroke="#5a5a5a"/></svg>
<svg class="a" style="left:1695px;top:664px" width="13" height="13" viewBox="0 0 13 13"><rect x="0.5" y="0.5" width="12" height="12" fill="#fff" stroke="#5a5a5a"/></svg>
<svg class="a" style="left:1795px;top:664px" width="13" height="13" viewBox="0 0 13 13"><rect x="0.5" y="0.5" width="12" height="12" fill="#fff" stroke="#5a5a5a"/></svg>
<svg class="a" style="left:1895px;top:664px" width="4" height="13" viewBox="0 0 4 13"><rect x="0.5" y="0.5" width="12" height="12" fill="#fff" stroke="#5a5a5a"/></svg>
<div class="a" style="left:251px;top:703px;width:1647px;height:1px;background:#a0a0a0"></div>
<div class="t" style="right:1373px;top:686px;text-align:right;letter-spacing:-0.2px">11</div>
<div class="t" style="left:555px;top:686px;letter-spacing:-0.2px">Volker Fied</div>
<div class="t" style="left:655px;top:686px;letter-spacing:-0.2px">Mi 24.08.2016</div>
<div class="t" style="right:1073px;top:686px;text-align:right;letter-spacing:-0.2px">08:00</div>
<div class="t" style="right:973px;top:686px;text-align:right;letter-spacing:-0.2px">16:42</div>
<div class="t" style="right:873px;top:686px;text-align:right;letter-spacing:-0.2px">1,00</div>
<div class="t" style="right:773px;top:686px;text-align:right;letter-spacing:-0.2px">7,70</div>
<div class="t" style="right:673px;top:686px;text-align:right;letter-spacing:-0.2px">1,00</div>
<div class="t" style="right:573px;top:686px;text-align:right;letter-spacing:-0.2px">10,20</div>
<div class="t" style="right:473px;top:686px;text-align:right;letter-spacing:-0.2px">005</div>
<div class="t" style="right:373px;top:686px;text-align:right;letter-spacing:-0.2px">2</div>
<svg class="a" style="left:1595px;top:686px" width="13" height="13" viewBox="0 0 13 13"><rect x="0.5" y="0.5" width="12" height="12" fill="#fff" stroke="#5a5a5a"/></svg>
<svg class="a" style="left:1695px;top:686px" width="13" height="13" viewBox="0 0 13 13"><rect x="0.5" y="0.5" width="12" height="12" fill="#fff" stroke="#5a5a5a"/></svg>
<svg class="a" style="left:1795px;top:686px" width="13" height="13" viewBox="0 0 13 13"><rect x="0.5" y="0.5" width="12" height="12" fill="#fff" stroke="#5a5a5a"/></svg>
<svg class="a" style="left:1895px;top:686px" width="4" height="13" viewBox="0 0 4 13"><rect x="0.5" y="0.5" width="12" height="12" fill="#fff" stroke="#5a5a5a"/></svg>
<div class="a" style="left:251px;top:725px;width:1647px;height:1px;background:#a0a0a0"></div>
<div class="t" style="right:1373px;top:708px;text-align:right;letter-spacing:-0.2px">11</div>
<div class="t" style="left:555px;top:708px;letter-spacing:-0.2px">Volker Fied</div>
<div class="t" style="left:655px;top:708px;letter-spacing:-0.2px">Do 25.08.2016</div>
<div class="t" style="right:1073px;top:708px;text-align:right;letter-spacing:-0.2px">08:00</div>
<div class="t" style="right:973px;top:708px;text-align:right;letter-spacing:-0.2px">16:42</div>
<div class="t" style="right:873px;top:708px;text-align:right;letter-spacing:-0.2px">1,00</div>
<div class="t" style="right:773px;top:708px;text-align:right;letter-spacing:-0.2px">7,70</div>
<div class="t" style="right:673px;top:708px;text-align:right;letter-spacing:-0.2px">1,00</div>
<div class="t" style="right:573px;top:708px;text-align:right;letter-spacing:-0.2px">10,20</div>
<div class="t" style="right:473px;top:708px;text-align:right;letter-spacing:-0.2px">005</div>
<div class="t" style="right:373px;top:708px;text-align:right;letter-spacing:-0.2px">2</div>
<svg class="a" style="left:1595px;top:708px" width="13" height="13" viewBox="0 0 13 13"><rect x="0.5" y="0.5" width="12" height="12" fill="#fff" stroke="#5a5a5a"/></svg>
<svg class="a" style="left:1695px;top:708px" width="13" height="13" viewBox="0 0 13 13"><rect x="0.5" y="0.5" width="12" height="12" fill="#fff" stroke="#5a5a5a"/></svg>
<svg class="a" style="left:1795px;top:708px" width="13" height="13" viewBox="0 0 13 13"><rect x="0.5" y="0.5" width="12" height="12" fill="#fff" stroke="#5a5a5a"/></svg>
<svg class="a" style="left:1895px;top:708px" width="4" height="13" viewBox="0 0 4 13"><rect x="0.5" y="0.5" width="12" height="12" fill="#fff" stroke="#5a5a5a"/></svg>
<div class="a" style="left:251px;top:747px;width:1647px;height:1px;background:#a0a0a0"></div>
<div class="t" style="right:1373px;top:730px;text-align:right;letter-spacing:-0.2px">11</div>
<div class="t" style="left:555px;top:730px;letter-spacing:-0.2px">Volker Fied</div>
<div class="t" style="left:655px;top:730px;letter-spacing:-0.2px">Fr 26.08.2016</div>
<div class="t" style="right:1073px;top:730px;text-align:right;letter-spacing:-0.2px">08:00</div>
<div class="t" style="right:973px;top:730px;text-align:right;letter-spacing:-0.2px">16:42</div>
<div class="t" style="right:873px;top:730px;text-align:right;letter-spacing:-0.2px">1,00</div>
<div class="t" style="right:773px;top:730px;text-align:right;letter-spacing:-0.2px">7,70</div>
<div class="t" style="right:673px;top:730px;text-align:right;letter-spacing:-0.2px">1,00</div>
<div class="t" style="right:573px;top:730px;text-align:right;letter-spacing:-0.2px">10,20</div>
<div class="t" style="right:473px;top:730px;text-align:right;letter-spacing:-0.2px">005</div>
<div class="t" style="right:373px;top:730px;text-align:right;letter-spacing:-0.2px">2</div>
<svg class="a" style="left:1595px;top:730px" width="13" height="13" viewBox="0 0 13 13"><rect x="0.5" y="0.5" width="12" height="12" fill="#fff" stroke="#5a5a5a"/></svg>
<svg class="a" style="left:1695px;top:730px" width="13" height="13" viewBox="0 0 13 13"><rect x="0.5" y="0.5" width="12" height="12" fill="#fff" stroke="#5a5a5a"/></svg>
<svg class="a" style="left:1795px;top:730px" width="13" height="13" viewBox="0 0 13 13"><rect x="0.5" y="0.5" width="12" height="12" fill="#fff" stroke="#5a5a5a"/></svg>
<svg class="a" style="left:1895px;top:730px" width="4" height="13" viewBox="0 0 4 13"><rect x="0.5" y="0.5" width="12" height="12" fill="#fff" stroke="#5a5a5a"/></svg>
<div class="a" style="left:251px;top:769px;width:1647px;height:1px;background:#a0a0a0"></div>
<div class="t" style="right:1373px;top:752px;text-align:right;letter-spacing:-0.2px">11</div>
<div class="t" style="left:555px;top:752px;letter-spacing:-0.2px">Volker Fied</div>
<div class="t" style="left:655px;top:752px;letter-spacing:-0.2px">Mo 29.08.2016</div>
<div class="t" style="right:1073px;top:752px;text-align:right;letter-spacing:-0.2px">08:00</div>
<div class="t" style="right:973px;top:752px;text-align:right;letter-spacing:-0.2px">16:42</div>
<div class="t" style="right:873px;top:752px;text-align:right;letter-spacing:-0.2px">1,00</div>
<div class="t" style="right:773px;top:752px;text-align:right;letter-spacing:-0.2px">7,70</div>
<div class="t" style="right:673px;top:752px;text-align:right;letter-spacing:-0.2px">1,00</div>
<div class="t" style="right:573px;top:752px;text-align:right;letter-spacing:-0.2px">10,20</div>
<div class="t" style="right:473px;top:752px;text-align:right;letter-spacing:-0.2px">005</div>
<div class="t" style="right:373px;top:752px;text-align:right;letter-spacing:-0.2px">2</div>
<svg class="a" style="left:1595px;top:752px" width="13" height="13" viewBox="0 0 13 13"><rect x="0.5" y="0.5" width="12" height="12" fill="#fff" stroke="#5a5a5a"/></svg>
<svg class="a" style="left:1695px;top:752px" width="13" height="13" viewBox="0 0 13 13"><rect x="0.5" y="0.5" width="12" height="12" fill="#fff" stroke="#5a5a5a"/></svg>
<svg class="a" style="left:1795px;top:752px" width="13" height="13" viewBox="0 0 13 13"><rect x="0.5" y="0.5" width="12" height="12" fill="#fff" stroke="#5a5a5a"/></svg>
<svg class="a" style="left:1895px;top:752px" width="4" height="13" viewBox="0 0 4 13"><rect x="0.5" y="0.5" width="12" height="12" fill="#fff" stroke="#5a5a5a"/></svg>
<div class="a" style="left:251px;top:791px;width:1647px;height:1px;background:#a0a0a0"></div>
<div class="t" style="right:1373px;top:774px;text-align:right;letter-spacing:-0.2px">11</div>
<div class="t" style="left:555px;top:774px;letter-spacing:-0.2px">Volker Fied</div>
<div class="t" style="left:655px;top:774px;letter-spacing:-0.2px">Di 30.08.2016</div>
<div class="t" style="right:1073px;top:774px;text-align:right;letter-spacing:-0.2px">08:00</div>
<div class="t" style="right:973px;top:774px;text-align:right;letter-spacing:-0.2px">16:42</div>
<div class="t" style="right:873px;top:774px;text-align:right;letter-spacing:-0.2px">1,00</div>
<div class="t" style="right:773px;top:774px;text-align:right;letter-spacing:-0.2px">7,70</div>
<div class="t" style="right:673px;top:774px;text-align:right;letter-spacing:-0.2px">1,00</div>
<div class="t" style="right:573px;top:774px;text-align:right;letter-spacing:-0.2px">10,20</div>
<div class="t" style="right:473px;top:774px;text-align:right;letter-spacing:-0.2px">005</div>
<div class="t" style="right:373px;top:774px;text-align:right;letter-spacing:-0.2px">2</div>
<svg class="a" style="left:1595px;top:774px" width="13" height="13" viewBox="0 0 13 13"><rect x="0.5" y="0.5" width="12" height="12" fill="#fff" stroke="#5a5a5a"/></svg>
<svg class="a" style="left:1695px;top:774px" width="13" height="13" viewBox="0 0 13 13"><rect x="0.5" y="0.5" width="12" height="12" fill="#fff" stroke="#5a5a5a"/></svg>
<svg class="a" style="left:1795px;top:774px" width="13" height="13" viewBox="0 0 13 13"><rect x="0.5" y="0.5" width="12" height="12" fill="#fff" stroke="#5a5a5a"/></svg>
<svg class="a" style="left:1895px;top:774px" width="4" height="13" viewBox="0 0 4 13"><rect x="0.5" y="0.5" width="12" height="12" fill="#fff" stroke="#5a5a5a"/></svg>
<div class="a" style="left:251px;top:813px;width:1647px;height:1px;background:#a0a0a0"></div>
<div class="t" style="right:1373px;top:796px;text-align:right;letter-spacing:-0.2px">11</div>
<div class="t" style="left:555px;top:796px;letter-spacing:-0.2px">Volker Fied</div>
<div class="t" style="left:655px;top:796px;letter-spacing:-0.2px">Mi 31.08.2016</div>
<div class="t" style="right:1073px;top:796px;text-align:right;letter-spacing:-0.2px">08:00</div>
<div class="t" style="right:973px;top:796px;text-align:right;letter-spacing:-0.2px">16:42</div>
<div class="t" style="right:873px;top:796px;text-align:right;letter-spacing:-0.2px">1,00</div>
<div class="t" style="right:773px;top:796px;text-align:right;letter-spacing:-0.2px">7,70</div>
<div class="t" style="right:673px;top:796px;text-align:right;letter-spacing:-0.2px">1,00</div>
<div class="t" style="right:573px;top:796px;text-align:right;letter-spacing:-0.2px">10,20</div>
<div class="t" style="right:473px;top:796px;text-align:right;letter-spacing:-0.2px">005</div>
<div class="t" style="right:373px;top:796px;text-align:right;letter-spacing:-0.2px">2</div>
<svg class="a" style="left:1595px;top:796px" width="13" height="13" viewBox="0 0 13 13"><rect x="0.5" y="0.5" width="12" height="12" fill="#fff" stroke="#5a5a5a"/></svg>
<svg class="a" style="left:1695px;top:796px" width="13" height="13" viewBox="0 0 13 13"><rect x="0.5" y="0.5" width="12" height="12" fill="#fff" stroke="#5a5a5a"/></svg>
<svg class="a" style="left:1795px;top:796px" width="13" height="13" viewBox="0 0 13 13"><rect x="0.5" y="0.5" width="12" height="12" fill="#fff" stroke="#5a5a5a"/></svg>
<svg class="a" style="left:1895px;top:796px" width="4" height="13" viewBox="0 0 4 13"><rect x="0.5" y="0.5" width="12" height="12" fill="#fff" stroke="#5a5a5a"/></svg>
<div class="a" style="left:351px;top:330px;width:1px;height:483px;background:#a0a0a0"></div>
<div class="a" style="left:451px;top:330px;width:1px;height:483px;background:#a0a0a0"></div>
<div class="a" style="left:551px;top:330px;width:1px;height:483px;background:#a0a0a0"></div>
<div class="a" style="left:651px;top:330px;width:1px;height:483px;background:#a0a0a0"></div>
<div class="a" style="left:751px;top:330px;width:1px;height:483px;background:#a0a0a0"></div>
<div class="a" style="left:851px;top:330px;width:1px;height:483px;background:#a0a0a0"></div>
<div class="a" style="left:951px;top:330px;width:1px;height:483px;background:#a0a0a0"></div>
<div class="a" style="left:1051px;top:330px;width:1px;height:483px;background:#a0a0a0"></div>
<div class="a" style="left:1151px;top:330px;width:1px;height:483px;background:#a0a0a0"></div>
<div class="a" style="left:1251px;top:330px;width:1px;height:483px;background:#a0a0a0"></div>
<div class="a" style="left:1351px;top:330px;width:1px;height:483px;background:#a0a0a0"></div>
<div class="a" style="left:1451px;top:330px;width:1px;height:483px;background:#a0a0a0"></div>
<div class="a" style="left:1551px;top:330px;width:1px;height:483px;background:#a0a0a0"></div>
<div class="a" style="left:1651px;top:330px;width:1px;height:483px;background:#a0a0a0"></div>
<div class="a" style="left:1751px;top:330px;width:1px;height:483px;background:#a0a0a0"></div>
<div class="a" style="left:1851px;top:330px;width:1px;height:483px;background:#a0a0a0"></div>
<div class="a" style="left:251px;top:973px;width:1647px;height:17px;background:#f0f0f0"></div>
<div class="a" style="left:268px;top:974px;width:1154px;height:15px;background:#cdcdcd"></div>
<svg class="a" style="left:256px;top:977px" width="7" height="9" viewBox="0 0 7 9"><path d="M5.5 1 L2 4.5 L5.5 8" stroke="#606060" stroke-width="1.6" fill="none"/></svg>
<svg class="a" style="left:1884px;top:977px" width="7" height="9" viewBox="0 0 7 9"><path d="M1.5 1 L5 4.5 L1.5 8" stroke="#606060" stroke-width="1.6" fill="none"/></svg>
<div class="a" style="left:250px;top:993px;width:1649px;height:27px;background:linear-gradient(#fdfdfd,#f3f3f3 60%,#eeeeee)"></div>
<div class="t" style="left:253px;top:999px;letter-spacing:-0.2px">22 Sätze</div>
<div class="a" style="left:302px;top:999px;width:1px;height:15px;background:#cfcfcf"></div>
<div class="a" style="left:310px;top:1004px;width:13px;height:5px;background:#d0d0d0;border:1px solid #b8b8b8"></div>
<svg class="a" style="left:332px;top:998px" width="14" height="14" viewBox="0 0 14 14"><path d="M2 6 Q3 2 7 2 Q10 2 11.5 4 L12.5 2.5 L12.5 7 L8 7 L10 5.5 Q9 4 7 4 Q5 4 4.3 6 Z" fill="#2fa43a"/><path d="M12 8 Q11 12 7 12 Q4 12 2.5 10 L1.5 11.5 L1.5 7 L6 7 L4 8.5 Q5 10 7 10 Q9 10 9.7 8 Z" fill="#2fa43a"/></svg>
<div class="a" style="left:354px;top:999px;width:1px;height:15px;background:#cfcfcf"></div>
<div class="t" style="left:360px;top:998px;font-size:12px;line-height:15px;letter-spacing:-0.1px;transform:none">Filter: -kein Filter</div>
</body></html>
